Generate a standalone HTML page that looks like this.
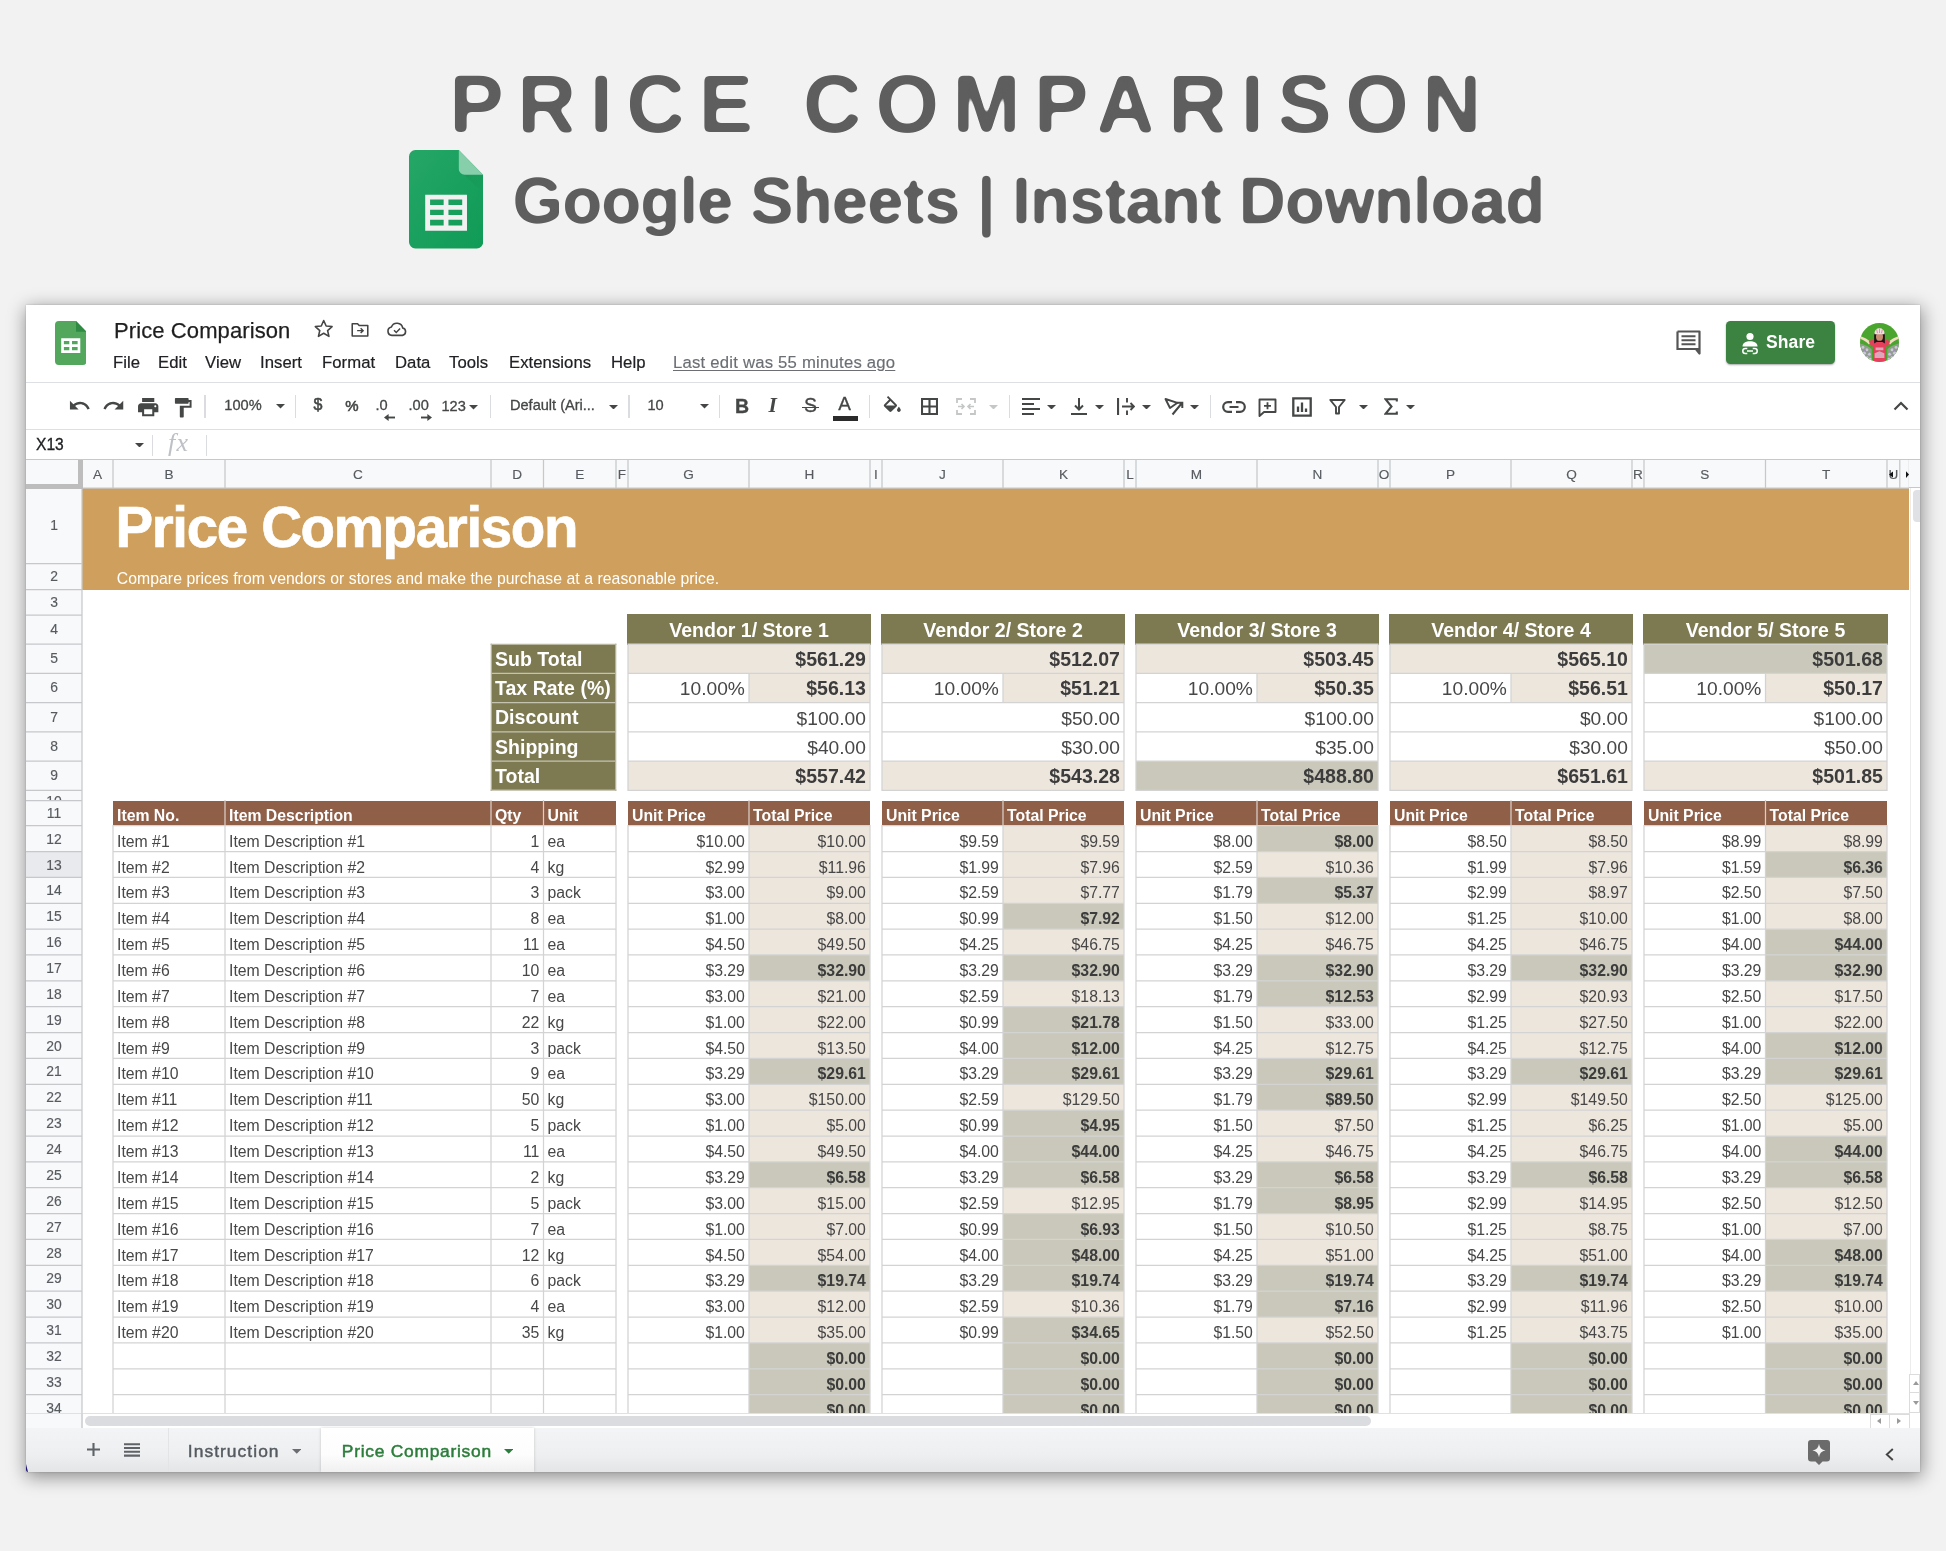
<!DOCTYPE html><html lang="en"><head><meta charset="utf-8"><title>Price Comparison</title><style>
*{box-sizing:border-box;margin:0;padding:0}
html,body{width:1946px;height:1551px;overflow:hidden}
body{background:#f2f2f2;font-family:"Liberation Sans",sans-serif;position:relative;color:#434343}
.abs,#win div,#win span.t,#win svg{position:absolute}
#win{will-change:transform;position:absolute;left:26px;top:305px;width:1894px;height:1167px;background:#fff;box-shadow:1px 4px 17px 1px rgba(0,0,0,.42), 0 0 2px rgba(0,0,0,.2);overflow:hidden}
.t{white-space:nowrap}
.menu{font-size:16.7px;color:#202124;top:48px;line-height:20px;letter-spacing:.05px;-webkit-text-stroke:.2px #202124}
.cell{overflow:hidden;white-space:nowrap;font-size:15.8px;line-height:1;color:#474747}
.cell.b{color:#3c3c3c}
.cell.hdr{color:#fff}
.cell span{position:absolute;bottom:2.1px;white-space:nowrap}
.l span{left:4.0px}.r span{right:4.1px}.c span{left:0;right:0;text-align:center}
.b{font-weight:bold}
.bd{border-right:1.3px solid #d4d4d4;border-bottom:1.3px solid #d4d4d4}
.big{font-size:19.2px}
.big.b,.big.hdr{font-size:19.55px}
.th{font-size:15.8px}
.th span{bottom:2.1px}
.big span{bottom:3.9px}
.hdr{color:#fff;font-weight:bold}
.rh{background:#f8f9fa;color:#575b60;-webkit-text-stroke:.15px #575b60;font-size:13.9px;text-align:center}
.ch{color:#575b60;-webkit-text-stroke:.15px #575b60;font-size:13.6px;text-align:center;line-height:31px}
.tb{color:#444}
</style></head><body>
<svg class="abs" style="left:0;top:0" width="1946" height="290" viewBox="0 0 1946 290">
<defs><filter id="rnd" x="-2%" y="-20%" width="104%" height="140%" color-interpolation-filters="sRGB"><feGaussianBlur stdDeviation="2.6"/><feColorMatrix type="matrix" values="1 0 0 0 0  0 1 0 0 0  0 0 1 0 0  0 0 0 7 -3"/></filter>
<filter id="rnd2" x="-2%" y="-20%" width="104%" height="140%" color-interpolation-filters="sRGB"><feGaussianBlur stdDeviation="2.1"/><feColorMatrix type="matrix" values="1 0 0 0 0  0 1 0 0 0  0 0 1 0 0  0 0 0 6 -2.5"/></filter></defs>
<text x="449.6" y="132.3" font-family="Liberation Sans, sans-serif" font-weight="bold" font-size="81" letter-spacing="13.95" fill="#5e5e5e" filter="url(#rnd)">PRICE COMPARISON</text>
<text x="512.7" y="223.3" font-family="Liberation Sans, sans-serif" font-weight="bold" font-size="64.5" letter-spacing="-0.35" fill="#5e5e5e" stroke="#5e5e5e" stroke-width="0.3" filter="url(#rnd2)">Google Sheets | Instant Download</text>
</svg>
<svg class="abs" style="left:408.7px;top:150.4px" width="74.2" height="98.4" viewBox="0 0 76 99" preserveAspectRatio="none">
<defs><linearGradient id="gs" x1="0" y1="0" x2="1" y2="1"><stop offset="0" stop-color="#25a667"/><stop offset="1" stop-color="#0f9b56"/></linearGradient>
<linearGradient id="gf" x1="0" y1="0" x2="1" y2="1"><stop offset="0" stop-color="#178f50" stop-opacity=".55"/><stop offset="1" stop-color="#178f50" stop-opacity="0"/></linearGradient></defs>
<path d="M6.500 0H51l25 25v67.500a6.500 6.500 0 0 1-6.500 6.500h-63A6.500 6.500 0 0 1 0 92.500v-86A6.500 6.500 0 0 1 6.500 0z" fill="url(#gs)"/>
<path d="M53 22l23 3v18z" fill="url(#gf)"/>
<path d="M51 0l25 25H57a6 6 0 0 1-6-6z" fill="#87ceab"/>
<path d="M16.600 45h42.800v36.300H16.600z M21.600 49.900v5.400h13.900v-5.400z M40.400 49.900v5.400h14.100v-5.400z M21.600 60v5.500h13.900V60z M40.400 60v5.500h14.100V60z M21.600 70.100V76h13.900v-5.900z M40.400 70.100V76h14.100v-5.900z" fill="#f1f1f1" fill-rule="evenodd"/>
</svg>
<div id="win">
<svg style="left:28.500px;top:15.800px" width="31.500" height="44" viewBox="0 0 33 45" preserveAspectRatio="none">
<path d="M4 0h18l11 11v30a4 4 0 0 1-4 4H4a4 4 0 0 1-4-4V4a4 4 0 0 1 4-4z" fill="#53a75d"/>
<path d="M22 0l11 11H22z" fill="#2f8a43"/>
<path d="M6.500 17.600h20v15h-20z M9.300 20.400v3.400h5.700v-3.400z M17.800 20.400v3.400h5.900v-3.400z M9.300 26.600v3.300h5.700v-3.300z M17.800 26.600v3.300h5.900v-3.300z" fill="#fff" fill-rule="evenodd"/>
</svg>
<span class="t" style="left:88px;top:12px;font-size:22px;line-height:28px;color:#1f1f1f;letter-spacing:.1px;-webkit-text-stroke:.25px #1f1f1f">Price Comparison</span>
<svg style="left:286.400px;top:12px" width="23.400" height="23.400" viewBox="0 0 24 24"><path d="M12 3.6l2.5 5.6 6.1.6-4.6 4.1 1.4 6-5.4-3.2-5.4 3.2 1.4-6-4.6-4.1 6.1-.6z" fill="none" stroke="#444" stroke-width="1.600" stroke-linejoin="round"/></svg>
<svg style="left:324px;top:15px" width="20" height="18" viewBox="0 0 24 22"><path d="M2.5 4.5h6.5l2 2.3h10.5v12.7h-19z" fill="none" stroke="#444" stroke-width="1.9" stroke-linejoin="round"/><path d="M8.5 13h6.5M12.8 10l3 3-3 3" fill="none" stroke="#444" stroke-width="1.8"/></svg>
<svg style="left:360px;top:15px" width="22" height="18" viewBox="0 0 26 20"><path d="M7 17.5a5 5 0 0 1-.6-9.9 7 7 0 0 1 13.4 1.3 4.4 4.4 0 0 1-.3 8.6z" fill="none" stroke="#444" stroke-width="1.9" stroke-linejoin="round"/><path d="M9.5 11.5l2.6 2.6 4.6-4.6" fill="none" stroke="#444" stroke-width="1.8"/></svg>
<span class="t menu" style="left:87px">File</span>
<span class="t menu" style="left:132px">Edit</span>
<span class="t menu" style="left:179px">View</span>
<span class="t menu" style="left:234px">Insert</span>
<span class="t menu" style="left:296px">Format</span>
<span class="t menu" style="left:369px">Data</span>
<span class="t menu" style="left:423px">Tools</span>
<span class="t menu" style="left:483px">Extensions</span>
<span class="t menu" style="left:585px">Help</span>
<span class="t menu" style="left:647px;color:#6b6f74;-webkit-text-stroke:.15px #6b6f74;text-decoration:underline;text-underline-offset:2px;letter-spacing:.22px">Last edit was 55 minutes ago</span>
<svg style="left:1649px;top:24px" width="27" height="27" viewBox="0 0 27 27"><path d="M2.5 2.5h22v17.5h-3.6l3.6 4.5v-4.5" fill="none" stroke="#555" stroke-width="2.2" stroke-linejoin="round"/><path d="M2.5 2.5v17.5h19" fill="none" stroke="#555" stroke-width="2.2"/><path d="M6.5 7.3h14M6.5 11.3h14M6.5 15.3h14" stroke="#555" stroke-width="1.9"/></svg>
<div style="left:1700px;top:16px;width:109px;height:43px;background:#3c8241;border-radius:4.500px;box-shadow:0 1px 2px rgba(0,0,0,.35)"></div>
<svg style="left:1713px;top:26px" width="22" height="24" viewBox="0 0 22 24"><circle cx="11" cy="5.5" r="3.6" fill="#fff"/><path d="M3.5 15.5c0-3.6 3.4-5.2 7.5-5.2s7.5 1.600 7.500 5.200z" fill="#fff"/><path d="M8.300 17.500h-2a2.500 2.500 0 0 0 0 5h2M13.700 17.500h2a2.500 2.500 0 0 1 0 5h-2M8 20h6" fill="none" stroke="#fff" stroke-width="1.5"/></svg>
<span class="t" style="left:1740px;top:26px;font-size:17.5px;line-height:22px;color:#fff;font-weight:bold;letter-spacing:.1px">Share</span>
<svg style="left:1833.7px;top:18px" width="39" height="39" viewBox="0 0 40 40"><defs><clipPath id="av"><circle cx="20" cy="20" r="20"/></clipPath></defs><g clip-path="url(#av)"><rect width="40" height="40" fill="#4aa52e"/><path d="M0 21c5 1 9 3 12 6v13H0zM40 21c-5 1-9 3-12 6v13h12z" fill="#8fa08a"/><g fill="#cfc6dc"><circle cx="3" cy="25" r="1.500"/><circle cx="7" cy="27.500" r="1.600"/><circle cx="4.500" cy="31" r="1.700"/><circle cx="9.500" cy="32" r="1.500"/><circle cx="7" cy="35.500" r="1.600"/><circle cx="10.500" cy="37" r="1.300"/><circle cx="37" cy="25" r="1.500"/><circle cx="33" cy="27.500" r="1.600"/><circle cx="35.500" cy="31" r="1.700"/><circle cx="30.500" cy="32" r="1.500"/><circle cx="33" cy="35.500" r="1.600"/><circle cx="29.500" cy="37" r="1.300"/></g><g fill="#9a8fb0"><circle cx="5" cy="28" r="1.100"/><circle cx="8" cy="30.500" r="1"/><circle cx="6" cy="33.500" r="1.100"/><circle cx="35" cy="28" r="1.100"/><circle cx="32" cy="30.500" r="1"/><circle cx="34" cy="33.500" r="1.100"/></g><path d="M-1 13c5 1.500 9 3.500 12 6.500l-1.800 2.500C6 19 3 17 -1 16zM41 13c-5 1.500-9 3.500-12 6.500l1.800 2.500C34 19 37 17 41 16z" fill="#f3dcc0"/><path d="M9 19c3-1.800 6.500-2.500 11-2.500s8 .7 11 2.500l-2.800 5.500-1.700-.8V41h-13V23.700l-1.700.8z" fill="#e63f5c"/><path d="M16 25h8v3h-8zM15 31l5-2 5 2v5H15z" fill="#d9c9d9" opacity=".75"/><path d="M14.500 10.500h11V21l-2.500-1.500h-6L14.500 21z" fill="#1d1614"/><ellipse cx="20" cy="14" rx="3.600" ry="4.300" fill="#c98c73"/><path d="M14.800 11.500c0-4 2.300-6 5.200-6s5.200 2 5.200 6z" fill="#f1dfe2"/><path d="M17 6.500l1 4M20 5.800v4.500M23 6.500l-1 4" stroke="#d990a5" stroke-width="1"/></g></svg>
<div style="left:0;top:77px;width:1894px;height:1.3px;background:#dcdfe3"></div>
<svg style="left:41.6px;top:89.2px" width="23.2" height="23.2" viewBox="0 0 24 24"><path d="M12.5 8c-2.650 0-5.050.99-6.900 2.600L2 7v9h9l-3.620-3.620c1.390-1.160 3.160-1.880 5.120-1.880 3.540 0 6.550 2.310 7.600 5.500l2.370-.78C21.080 11.030 17.150 8 12.500 8z" fill="#444746"/></svg>
<svg style="left:76.2px;top:89.2px" width="23.2" height="23.2" viewBox="0 0 24 24"><path d="M18.400 10.600C16.550 8.990 14.150 8 11.500 8c-4.650 0-8.580 3.030-9.960 7.220L3.900 16c1.050-3.190 4.050-5.500 7.600-5.500 1.950 0 3.730.72 5.120 1.880L13 16h9V7l-3.600 3.600z" fill="#444746"/></svg>
<svg style="left:110.4px;top:90.2px" width="24.4" height="24.4" viewBox="0 0 24 24"><path d="M19 8H5c-1.660 0-3 1.340-3 3v6h4v4h12v-4h4v-6c0-1.660-1.340-3-3-3zm-3 11H8v-5h8v5zm3-7c-.55 0-1-.45-1-1s.45-1 1-1 1 .45 1 1-.45 1-1 1zm-1-9H6v4h12V3z" fill="#444746"/></svg>
<svg style="left:145.2px;top:91.0px" width="23.5" height="23.5" viewBox="0 0 24 24"><path d="M18 4V3c0-.55-.45-1-1-1H5c-.55 0-1 .45-1 1v4c0 .55.45 1 1 1h12c.55 0 1-.45 1-1V6h1v4H9v11c0 .55.45 1 1 1h2c.55 0 1-.45 1-1v-9h8V4h-3z" fill="#444746"/></svg>
<div style="left:178.4px;top:89.5px;width:1.3px;height:23.5px;background:#dadce0"></div>
<span class="t" style="left:198.3px;top:91.5px;font-size:14.6px;line-height:16.6px;color:#444746;-webkit-text-stroke:.3px #444746;">100%</span>
<svg style="left:249.8px;top:99.2px" width="9" height="4.5" viewBox="0 0 10 5"><path d="M0 0h10L5 5z" fill="#444746"/></svg>
<div style="left:268.9px;top:89.5px;width:1.3px;height:23.5px;background:#dadce0"></div>
<span class="t" style="left:287.6px;top:91.2px;font-size:16px;line-height:18px;color:#444746;-webkit-text-stroke:.3px #444746;-webkit-text-stroke:.55px #444746">$</span>
<span class="t" style="left:319.3px;top:91.8px;font-size:15px;line-height:17px;color:#444746;-webkit-text-stroke:.3px #444746;-webkit-text-stroke:.55px #444746;letter-spacing:0">%</span>
<span class="t" style="left:349.5px;top:91.5px;font-size:14.6px;line-height:16.6px;color:#444746;-webkit-text-stroke:.3px #444746;">.0</span>
<svg style="left:358.3px;top:108.6px" width="11" height="7" viewBox="0 0 11 7"><path d="M11 3.500H3" fill="none" stroke="#444746" stroke-width="1.900"/><path d="M0 3.500L4.600 0v7z" fill="#444746"/></svg>
<span class="t" style="left:382.5px;top:91.5px;font-size:14.6px;line-height:16.6px;color:#444746;-webkit-text-stroke:.3px #444746;">.00</span>
<svg style="left:394.6px;top:108.6px" width="11" height="7" viewBox="0 0 11 7"><path d="M0 3.500H8" fill="none" stroke="#444746" stroke-width="1.900"/><path d="M11 3.500L6.400 0v7z" fill="#444746"/></svg>
<span class="t" style="left:415.5px;top:92.5px;font-size:14.6px;line-height:16.6px;color:#444746;-webkit-text-stroke:.3px #444746;">123</span>
<svg style="left:442.8px;top:100.2px" width="9" height="4.5" viewBox="0 0 10 5"><path d="M0 0h10L5 5z" fill="#444746"/></svg>
<div style="left:463.7px;top:89.5px;width:1.3px;height:23.5px;background:#dadce0"></div>
<span class="t" style="left:484.0px;top:91.8px;font-size:14.6px;line-height:16.6px;color:#444746;-webkit-text-stroke:.3px #444746;letter-spacing:-.02px">Default (Ari...</span>
<svg style="left:582.5px;top:99.8px" width="9" height="4.5" viewBox="0 0 10 5"><path d="M0 0h10L5 5z" fill="#444746"/></svg>
<div style="left:602.4px;top:89.5px;width:1.3px;height:23.5px;background:#dadce0"></div>
<span class="t" style="left:621.5px;top:91.5px;font-size:14.6px;line-height:16.6px;color:#444746;-webkit-text-stroke:.3px #444746;">10</span>
<svg style="left:674.1px;top:99.2px" width="9" height="4.5" viewBox="0 0 10 5"><path d="M0 0h10L5 5z" fill="#444746"/></svg>
<div style="left:693.0px;top:89.5px;width:1.3px;height:23.5px;background:#dadce0"></div>
<span class="t" style="left:709.0px;top:90.5px;font-size:19.5px;line-height:21.5px;color:#444746;-webkit-text-stroke:.3px #444746;font-weight:bold">B</span>
<span class="t" style="left:742.6px;top:89.2px;font-size:21.5px;line-height:23.5px;color:#444746;-webkit-text-stroke:.3px #444746;font-family:'Liberation Serif',serif;font-weight:bold;-webkit-text-stroke:0"><i>I</i></span>
<span class="t" style="left:778.0px;top:90.3px;font-size:19.5px;line-height:21.5px;color:#444746;-webkit-text-stroke:.3px #444746;font-weight:normal">S</span>
<div style="left:776px;top:101.5px;width:16.5px;height:1.8px;background:#444746"></div>
<span class="t" style="left:812.3px;top:88.0px;font-size:19px;line-height:21px;color:#444746;-webkit-text-stroke:.3px #444746;">A</span>
<div style="left:807.3px;top:111.0px;width:25px;height:4.5px;background:#2b2b2b"></div>
<div style="left:843.2px;top:89.5px;width:1.3px;height:23.5px;background:#dadce0"></div>
<svg style="left:854.8px;top:91.4px" width="22.6" height="22.6" viewBox="0 0 24 24"><path d="M16.560 8.940L7.620 0 6.210 1.410l2.380 2.380-5.150 5.150c-.59.59-.59 1.540 0 2.120l5.500 5.500c.29.29.68.44 1.060.44s.77-.15 1.060-.44l5.500-5.500c.59-.58.59-1.530 0-2.120zM5.210 10L10 5.210 14.790 10H5.210zM19 11.500s-2 2.170-2 3.500c0 1.100.9 2 2 2s2-.9 2-2c0-1.330-2-3.500-2-3.500z" fill="#444746"/></svg>
<svg style="left:894.5px;top:93.0px" width="17" height="17" viewBox="0 0 17 17"><path d="M1 1h15v15H1zM8.500 1v15M1 8.500h15" fill="none" stroke="#444746" stroke-width="2.100"/></svg>
<svg style="left:930.0px;top:93.0px" width="20" height="17" viewBox="0 0 20 17"><path d="M1 5V1h5M14 1h5v4M1 12v4h5M14 16h5v-4" fill="none" stroke="#c4c7c5" stroke-width="1.800"/><path d="M2 8.500h6M5.500 6l2.500 2.500L5.500 11M18 8.500h-6M14.500 6L12 8.500l2.500 2.500" fill="none" stroke="#c4c7c5" stroke-width="1.600"/></svg>
<svg style="left:962.8px;top:99.8px" width="9" height="4.5" viewBox="0 0 10 5"><path d="M0 0h10L5 5z" fill="#c4c7c5"/></svg>
<div style="left:982.8px;top:89.5px;width:1.3px;height:23.5px;background:#dadce0"></div>
<svg style="left:995.5px;top:93.0px" width="19" height="17" viewBox="0 0 19 17"><path d="M0 1h18M0 6h12M0 11h18M0 16h12" stroke="#444746" stroke-width="2.100"/></svg>
<svg style="left:1020.6px;top:99.8px" width="9" height="4.5" viewBox="0 0 10 5"><path d="M0 0h10L5 5z" fill="#444746"/></svg>
<svg style="left:1045.0px;top:93.0px" width="16" height="17" viewBox="0 0 16 17"><path d="M8 0v11M4 7.500l4 4 4-4M0 16h16" fill="none" stroke="#444746" stroke-width="2"/></svg>
<svg style="left:1068.7px;top:99.8px" width="9" height="4.5" viewBox="0 0 10 5"><path d="M0 0h10L5 5z" fill="#444746"/></svg>
<svg style="left:1090.5px;top:93.0px" width="18" height="17" viewBox="0 0 18 17"><path d="M1 0v17" stroke="#444746" stroke-width="2.200"/><path d="M10 0v4.500M10 12.500v4.500" stroke="#444746" stroke-width="1.900"/><path d="M5 8.500h12M13.500 5l3.500 3.500-3.500 3.500" fill="none" stroke="#444746" stroke-width="1.900"/></svg>
<svg style="left:1116.2px;top:99.8px" width="9" height="4.5" viewBox="0 0 10 5"><path d="M0 0h10L5 5z" fill="#444746"/></svg>
<svg style="left:1138.0px;top:92.0px" width="20" height="19" viewBox="0 0 20 19"><path d="M1.500 2l12 3.800-7.500 5.200z" fill="none" stroke="#444746" stroke-width="1.900" stroke-linejoin="round"/><path d="M8.500 17.500L18 6M13 5.800h5.300v5.300" fill="none" stroke="#444746" stroke-width="2"/></svg>
<svg style="left:1163.7px;top:99.8px" width="9" height="4.5" viewBox="0 0 10 5"><path d="M0 0h10L5 5z" fill="#444746"/></svg>
<div style="left:1183.7px;top:89.5px;width:1.3px;height:23.5px;background:#dadce0"></div>
<svg style="left:1195.5px;top:95.5px" width="24" height="12" viewBox="0 0 24 12"><path d="M10 1.200H6a4.800 4.800 0 0 0 0 9.600h4M14 1.200h4a4.800 4.800 0 0 1 0 9.600h-4M7.500 6h9" fill="none" stroke="#444746" stroke-width="2.200"/></svg>
<svg style="left:1232.0px;top:92.5px" width="19" height="19" viewBox="0 0 19 19"><path d="M1.500 1.500h16v12.500H6l-4.500 4z" fill="none" stroke="#444746" stroke-width="1.900" stroke-linejoin="round"/><path d="M9.500 4.300v7M6 7.800h7" stroke="#444746" stroke-width="1.800"/></svg>
<svg style="left:1265.5px;top:92.0px" width="20" height="20" viewBox="0 0 20 20"><path d="M1.300 1.300h17.400v17.400H1.300z" fill="none" stroke="#444746" stroke-width="2.300"/><path d="M6 9.500v5.500M10 5.500v9.500M14 11.500v3.500" stroke="#444746" stroke-width="2.300"/></svg>
<svg style="left:1303.0px;top:94.0px" width="17" height="16" viewBox="0 0 17 16"><path d="M1.300 1h14.400l-5.700 7v6.500H7V8z" fill="none" stroke="#444746" stroke-width="1.900" stroke-linejoin="round"/></svg>
<svg style="left:1333.0px;top:99.8px" width="9" height="4.5" viewBox="0 0 10 5"><path d="M0 0h10L5 5z" fill="#444746"/></svg>
<svg style="left:1357.5px;top:93.0px" width="14" height="17" viewBox="0 0 14 17"><path d="M12.800 3.500V1.200H1.500l6 7.300-6 7.300h11.300v-2.300" fill="none" stroke="#444746" stroke-width="2.100"/></svg>
<svg style="left:1380.3px;top:99.8px" width="9" height="4.5" viewBox="0 0 10 5"><path d="M0 0h10L5 5z" fill="#444746"/></svg>
<svg style="left:1867.0px;top:96.0px" width="16" height="10" viewBox="0 0 16 10"><path d="M1.500 8.500L8 2l6.500 6.500" fill="none" stroke="#444746" stroke-width="2.200"/></svg>
<div style="left:0;top:124px;width:1894px;height:1.300px;background:#dcdfe3"></div>
<span class="t" style="left:10.0px;top:131.0px;font-size:15.6px;line-height:17.6px;color:#202124;-webkit-text-stroke:.3px #202124;">X13</span>
<svg style="left:109.2px;top:137.6px" width="9" height="4.5" viewBox="0 0 10 5"><path d="M0 0h10L5 5z" fill="#444"/></svg>
<div style="left:126.1px;top:129.5px;width:1.3px;height:21.0px;background:#dadce0"></div>
<span class="t" style="left:142px;top:126px;font-size:26px;line-height:24px;font-style:italic;font-family:'Liberation Serif',serif;color:#bdc1c6;letter-spacing:1.2px">fx</span>
<div style="left:180.0px;top:129.5px;width:1.3px;height:21.0px;background:#dadce0"></div>
<div id="grid" style="left:0px;top:154px;width:1883.4px;height:954px;overflow:hidden;background:#fff">
<div style="left:56.0px;top:29.0px;width:1827.4px;height:101.5px;background:#cfa05d"></div>
<span class="t" style="left:89.4px;top:41.1px;font-size:56.5px;line-height:1;font-weight:bold;color:#fff;letter-spacing:-1.36px;-webkit-text-stroke:.7px #fff">Price Comparison</span>
<span class="t" style="left:90.8px;top:111.5px;font-size:15.75px;line-height:1;color:#fff;letter-spacing:.055px">Compare prices from vendors or stores and make the purchase at a reasonable price.</span>
<div class="cell l big hdr" style="left:465.0px;top:185.0px;width:125.0px;height:29.3px;background:#7d7a52;"><span>Sub Total</span></div>
<div class="cell l big hdr" style="left:465.0px;top:214.3px;width:125.0px;height:29.2px;background:#7d7a52;"><span>Tax Rate (%)</span></div>
<div class="cell l big hdr" style="left:465.0px;top:243.5px;width:125.0px;height:29.3px;background:#7d7a52;"><span>Discount</span></div>
<div class="cell l big hdr" style="left:465.0px;top:272.8px;width:125.0px;height:29.2px;background:#7d7a52;"><span>Shipping</span></div>
<div class="cell l big hdr" style="left:465.0px;top:302.0px;width:125.0px;height:29.3px;background:#7d7a52;"><span>Total</span></div>
<div class="cell c big hdr" style="left:601.4px;top:155.4px;width:243.2px;height:30.2px;background:#7d7a52;"><span style="bottom:3.9px">Vendor 1/ Store 1</span></div>
<div class="cell r big b" style="left:602.0px;top:185.0px;width:242.0px;height:29.3px;background:#ede6dd;"><span>$561.29</span></div>
<div class="cell r big" style="left:602.0px;top:214.3px;width:121.0px;height:29.2px;"><span>10.00%</span></div>
<div class="cell r big b" style="left:723.0px;top:214.3px;width:121.0px;height:29.2px;background:#ede6dd;"><span>$56.13</span></div>
<div class="cell r big" style="left:602.0px;top:243.5px;width:242.0px;height:29.3px;"><span>$100.00</span></div>
<div class="cell r big" style="left:602.0px;top:272.8px;width:242.0px;height:29.2px;"><span>$40.00</span></div>
<div class="cell r big b" style="left:602.0px;top:302.0px;width:242.0px;height:29.3px;background:#ede6dd;"><span>$557.42</span></div>
<div class="cell l hdr th" style="left:602.0px;top:341.6px;width:121.0px;height:25.1px;background:#8f5f48;"><span>Unit Price</span></div>
<div class="cell l hdr th" style="left:723.0px;top:341.6px;width:121.0px;height:25.1px;background:#8f5f48;"><span>Total Price</span></div>
<div class="cell r" style="left:602.0px;top:366.7px;width:121.0px;height:25.9px;"><span>$10.00</span></div>
<div class="cell r" style="left:723.0px;top:366.7px;width:121.0px;height:25.9px;background:#ede6dd;"><span>$10.00</span></div>
<div class="cell r" style="left:602.0px;top:392.6px;width:121.0px;height:25.9px;"><span>$2.99</span></div>
<div class="cell r" style="left:723.0px;top:392.6px;width:121.0px;height:25.9px;background:#ede6dd;"><span>$11.96</span></div>
<div class="cell r" style="left:602.0px;top:418.4px;width:121.0px;height:25.9px;"><span>$3.00</span></div>
<div class="cell r" style="left:723.0px;top:418.4px;width:121.0px;height:25.9px;background:#ede6dd;"><span>$9.00</span></div>
<div class="cell r" style="left:602.0px;top:444.3px;width:121.0px;height:25.9px;"><span>$1.00</span></div>
<div class="cell r" style="left:723.0px;top:444.3px;width:121.0px;height:25.9px;background:#ede6dd;"><span>$8.00</span></div>
<div class="cell r" style="left:602.0px;top:470.1px;width:121.0px;height:25.9px;"><span>$4.50</span></div>
<div class="cell r" style="left:723.0px;top:470.1px;width:121.0px;height:25.9px;background:#ede6dd;"><span>$49.50</span></div>
<div class="cell r" style="left:602.0px;top:496.0px;width:121.0px;height:25.9px;"><span>$3.29</span></div>
<div class="cell r b" style="left:723.0px;top:496.0px;width:121.0px;height:25.9px;background:#c9c8ba;"><span>$32.90</span></div>
<div class="cell r" style="left:602.0px;top:521.9px;width:121.0px;height:25.9px;"><span>$3.00</span></div>
<div class="cell r" style="left:723.0px;top:521.9px;width:121.0px;height:25.9px;background:#ede6dd;"><span>$21.00</span></div>
<div class="cell r" style="left:602.0px;top:547.7px;width:121.0px;height:25.9px;"><span>$1.00</span></div>
<div class="cell r" style="left:723.0px;top:547.7px;width:121.0px;height:25.9px;background:#ede6dd;"><span>$22.00</span></div>
<div class="cell r" style="left:602.0px;top:573.6px;width:121.0px;height:25.9px;"><span>$4.50</span></div>
<div class="cell r" style="left:723.0px;top:573.6px;width:121.0px;height:25.9px;background:#ede6dd;"><span>$13.50</span></div>
<div class="cell r" style="left:602.0px;top:599.4px;width:121.0px;height:25.9px;"><span>$3.29</span></div>
<div class="cell r b" style="left:723.0px;top:599.4px;width:121.0px;height:25.9px;background:#c9c8ba;"><span>$29.61</span></div>
<div class="cell r" style="left:602.0px;top:625.3px;width:121.0px;height:25.9px;"><span>$3.00</span></div>
<div class="cell r" style="left:723.0px;top:625.3px;width:121.0px;height:25.9px;background:#ede6dd;"><span>$150.00</span></div>
<div class="cell r" style="left:602.0px;top:651.2px;width:121.0px;height:25.9px;"><span>$1.00</span></div>
<div class="cell r" style="left:723.0px;top:651.2px;width:121.0px;height:25.9px;background:#ede6dd;"><span>$5.00</span></div>
<div class="cell r" style="left:602.0px;top:677.0px;width:121.0px;height:25.9px;"><span>$4.50</span></div>
<div class="cell r" style="left:723.0px;top:677.0px;width:121.0px;height:25.9px;background:#ede6dd;"><span>$49.50</span></div>
<div class="cell r" style="left:602.0px;top:702.9px;width:121.0px;height:25.9px;"><span>$3.29</span></div>
<div class="cell r b" style="left:723.0px;top:702.9px;width:121.0px;height:25.9px;background:#c9c8ba;"><span>$6.58</span></div>
<div class="cell r" style="left:602.0px;top:728.7px;width:121.0px;height:25.9px;"><span>$3.00</span></div>
<div class="cell r" style="left:723.0px;top:728.7px;width:121.0px;height:25.9px;background:#ede6dd;"><span>$15.00</span></div>
<div class="cell r" style="left:602.0px;top:754.6px;width:121.0px;height:25.9px;"><span>$1.00</span></div>
<div class="cell r" style="left:723.0px;top:754.6px;width:121.0px;height:25.9px;background:#ede6dd;"><span>$7.00</span></div>
<div class="cell r" style="left:602.0px;top:780.5px;width:121.0px;height:25.9px;"><span>$4.50</span></div>
<div class="cell r" style="left:723.0px;top:780.5px;width:121.0px;height:25.9px;background:#ede6dd;"><span>$54.00</span></div>
<div class="cell r" style="left:602.0px;top:806.3px;width:121.0px;height:25.9px;"><span>$3.29</span></div>
<div class="cell r b" style="left:723.0px;top:806.3px;width:121.0px;height:25.9px;background:#c9c8ba;"><span>$19.74</span></div>
<div class="cell r" style="left:602.0px;top:832.2px;width:121.0px;height:25.9px;"><span>$3.00</span></div>
<div class="cell r" style="left:723.0px;top:832.2px;width:121.0px;height:25.9px;background:#ede6dd;"><span>$12.00</span></div>
<div class="cell r" style="left:602.0px;top:858.0px;width:121.0px;height:25.9px;"><span>$1.00</span></div>
<div class="cell r" style="left:723.0px;top:858.0px;width:121.0px;height:25.9px;background:#ede6dd;"><span>$35.00</span></div>
<div class="cell r b" style="left:723.0px;top:883.9px;width:121.0px;height:25.9px;background:#c9c8ba;"><span>$0.00</span></div>
<div class="cell r b" style="left:723.0px;top:909.8px;width:121.0px;height:25.9px;background:#c9c8ba;"><span>$0.00</span></div>
<div class="cell r b" style="left:723.0px;top:935.6px;width:121.0px;height:25.9px;background:#c9c8ba;"><span>$0.00</span></div>
<div class="cell r b" style="left:723.0px;top:961.5px;width:121.0px;height:25.9px;background:#c9c8ba;"><span>$0.00</span></div>
<div class="cell c big hdr" style="left:855.4px;top:155.4px;width:243.2px;height:30.2px;background:#7d7a52;"><span style="bottom:3.9px">Vendor 2/ Store 2</span></div>
<div class="cell r big b" style="left:856.0px;top:185.0px;width:242.0px;height:29.3px;background:#ede6dd;"><span>$512.07</span></div>
<div class="cell r big" style="left:856.0px;top:214.3px;width:121.0px;height:29.2px;"><span>10.00%</span></div>
<div class="cell r big b" style="left:977.0px;top:214.3px;width:121.0px;height:29.2px;background:#ede6dd;"><span>$51.21</span></div>
<div class="cell r big" style="left:856.0px;top:243.5px;width:242.0px;height:29.3px;"><span>$50.00</span></div>
<div class="cell r big" style="left:856.0px;top:272.8px;width:242.0px;height:29.2px;"><span>$30.00</span></div>
<div class="cell r big b" style="left:856.0px;top:302.0px;width:242.0px;height:29.3px;background:#ede6dd;"><span>$543.28</span></div>
<div class="cell l hdr th" style="left:856.0px;top:341.6px;width:121.0px;height:25.1px;background:#8f5f48;"><span>Unit Price</span></div>
<div class="cell l hdr th" style="left:977.0px;top:341.6px;width:121.0px;height:25.1px;background:#8f5f48;"><span>Total Price</span></div>
<div class="cell r" style="left:856.0px;top:366.7px;width:121.0px;height:25.9px;"><span>$9.59</span></div>
<div class="cell r" style="left:977.0px;top:366.7px;width:121.0px;height:25.9px;background:#ede6dd;"><span>$9.59</span></div>
<div class="cell r" style="left:856.0px;top:392.6px;width:121.0px;height:25.9px;"><span>$1.99</span></div>
<div class="cell r" style="left:977.0px;top:392.6px;width:121.0px;height:25.9px;background:#ede6dd;"><span>$7.96</span></div>
<div class="cell r" style="left:856.0px;top:418.4px;width:121.0px;height:25.9px;"><span>$2.59</span></div>
<div class="cell r" style="left:977.0px;top:418.4px;width:121.0px;height:25.9px;background:#ede6dd;"><span>$7.77</span></div>
<div class="cell r" style="left:856.0px;top:444.3px;width:121.0px;height:25.9px;"><span>$0.99</span></div>
<div class="cell r b" style="left:977.0px;top:444.3px;width:121.0px;height:25.9px;background:#c9c8ba;"><span>$7.92</span></div>
<div class="cell r" style="left:856.0px;top:470.1px;width:121.0px;height:25.9px;"><span>$4.25</span></div>
<div class="cell r" style="left:977.0px;top:470.1px;width:121.0px;height:25.9px;background:#ede6dd;"><span>$46.75</span></div>
<div class="cell r" style="left:856.0px;top:496.0px;width:121.0px;height:25.9px;"><span>$3.29</span></div>
<div class="cell r b" style="left:977.0px;top:496.0px;width:121.0px;height:25.9px;background:#c9c8ba;"><span>$32.90</span></div>
<div class="cell r" style="left:856.0px;top:521.9px;width:121.0px;height:25.9px;"><span>$2.59</span></div>
<div class="cell r" style="left:977.0px;top:521.9px;width:121.0px;height:25.9px;background:#ede6dd;"><span>$18.13</span></div>
<div class="cell r" style="left:856.0px;top:547.7px;width:121.0px;height:25.9px;"><span>$0.99</span></div>
<div class="cell r b" style="left:977.0px;top:547.7px;width:121.0px;height:25.9px;background:#c9c8ba;"><span>$21.78</span></div>
<div class="cell r" style="left:856.0px;top:573.6px;width:121.0px;height:25.9px;"><span>$4.00</span></div>
<div class="cell r b" style="left:977.0px;top:573.6px;width:121.0px;height:25.9px;background:#c9c8ba;"><span>$12.00</span></div>
<div class="cell r" style="left:856.0px;top:599.4px;width:121.0px;height:25.9px;"><span>$3.29</span></div>
<div class="cell r b" style="left:977.0px;top:599.4px;width:121.0px;height:25.9px;background:#c9c8ba;"><span>$29.61</span></div>
<div class="cell r" style="left:856.0px;top:625.3px;width:121.0px;height:25.9px;"><span>$2.59</span></div>
<div class="cell r" style="left:977.0px;top:625.3px;width:121.0px;height:25.9px;background:#ede6dd;"><span>$129.50</span></div>
<div class="cell r" style="left:856.0px;top:651.2px;width:121.0px;height:25.9px;"><span>$0.99</span></div>
<div class="cell r b" style="left:977.0px;top:651.2px;width:121.0px;height:25.9px;background:#c9c8ba;"><span>$4.95</span></div>
<div class="cell r" style="left:856.0px;top:677.0px;width:121.0px;height:25.9px;"><span>$4.00</span></div>
<div class="cell r b" style="left:977.0px;top:677.0px;width:121.0px;height:25.9px;background:#c9c8ba;"><span>$44.00</span></div>
<div class="cell r" style="left:856.0px;top:702.9px;width:121.0px;height:25.9px;"><span>$3.29</span></div>
<div class="cell r b" style="left:977.0px;top:702.9px;width:121.0px;height:25.9px;background:#c9c8ba;"><span>$6.58</span></div>
<div class="cell r" style="left:856.0px;top:728.7px;width:121.0px;height:25.9px;"><span>$2.59</span></div>
<div class="cell r" style="left:977.0px;top:728.7px;width:121.0px;height:25.9px;background:#ede6dd;"><span>$12.95</span></div>
<div class="cell r" style="left:856.0px;top:754.6px;width:121.0px;height:25.9px;"><span>$0.99</span></div>
<div class="cell r b" style="left:977.0px;top:754.6px;width:121.0px;height:25.9px;background:#c9c8ba;"><span>$6.93</span></div>
<div class="cell r" style="left:856.0px;top:780.5px;width:121.0px;height:25.9px;"><span>$4.00</span></div>
<div class="cell r b" style="left:977.0px;top:780.5px;width:121.0px;height:25.9px;background:#c9c8ba;"><span>$48.00</span></div>
<div class="cell r" style="left:856.0px;top:806.3px;width:121.0px;height:25.9px;"><span>$3.29</span></div>
<div class="cell r b" style="left:977.0px;top:806.3px;width:121.0px;height:25.9px;background:#c9c8ba;"><span>$19.74</span></div>
<div class="cell r" style="left:856.0px;top:832.2px;width:121.0px;height:25.9px;"><span>$2.59</span></div>
<div class="cell r" style="left:977.0px;top:832.2px;width:121.0px;height:25.9px;background:#ede6dd;"><span>$10.36</span></div>
<div class="cell r" style="left:856.0px;top:858.0px;width:121.0px;height:25.9px;"><span>$0.99</span></div>
<div class="cell r b" style="left:977.0px;top:858.0px;width:121.0px;height:25.9px;background:#c9c8ba;"><span>$34.65</span></div>
<div class="cell r b" style="left:977.0px;top:883.9px;width:121.0px;height:25.9px;background:#c9c8ba;"><span>$0.00</span></div>
<div class="cell r b" style="left:977.0px;top:909.8px;width:121.0px;height:25.9px;background:#c9c8ba;"><span>$0.00</span></div>
<div class="cell r b" style="left:977.0px;top:935.6px;width:121.0px;height:25.9px;background:#c9c8ba;"><span>$0.00</span></div>
<div class="cell r b" style="left:977.0px;top:961.5px;width:121.0px;height:25.9px;background:#c9c8ba;"><span>$0.00</span></div>
<div class="cell c big hdr" style="left:1109.4px;top:155.4px;width:243.2px;height:30.2px;background:#7d7a52;"><span style="bottom:3.9px">Vendor 3/ Store 3</span></div>
<div class="cell r big b" style="left:1110.0px;top:185.0px;width:242.0px;height:29.3px;background:#ede6dd;"><span>$503.45</span></div>
<div class="cell r big" style="left:1110.0px;top:214.3px;width:121.0px;height:29.2px;"><span>10.00%</span></div>
<div class="cell r big b" style="left:1231.0px;top:214.3px;width:121.0px;height:29.2px;background:#ede6dd;"><span>$50.35</span></div>
<div class="cell r big" style="left:1110.0px;top:243.5px;width:242.0px;height:29.3px;"><span>$100.00</span></div>
<div class="cell r big" style="left:1110.0px;top:272.8px;width:242.0px;height:29.2px;"><span>$35.00</span></div>
<div class="cell r big b" style="left:1110.0px;top:302.0px;width:242.0px;height:29.3px;background:#c9c8ba;"><span>$488.80</span></div>
<div class="cell l hdr th" style="left:1110.0px;top:341.6px;width:121.0px;height:25.1px;background:#8f5f48;"><span>Unit Price</span></div>
<div class="cell l hdr th" style="left:1231.0px;top:341.6px;width:121.0px;height:25.1px;background:#8f5f48;"><span>Total Price</span></div>
<div class="cell r" style="left:1110.0px;top:366.7px;width:121.0px;height:25.9px;"><span>$8.00</span></div>
<div class="cell r b" style="left:1231.0px;top:366.7px;width:121.0px;height:25.9px;background:#c9c8ba;"><span>$8.00</span></div>
<div class="cell r" style="left:1110.0px;top:392.6px;width:121.0px;height:25.9px;"><span>$2.59</span></div>
<div class="cell r" style="left:1231.0px;top:392.6px;width:121.0px;height:25.9px;background:#ede6dd;"><span>$10.36</span></div>
<div class="cell r" style="left:1110.0px;top:418.4px;width:121.0px;height:25.9px;"><span>$1.79</span></div>
<div class="cell r b" style="left:1231.0px;top:418.4px;width:121.0px;height:25.9px;background:#c9c8ba;"><span>$5.37</span></div>
<div class="cell r" style="left:1110.0px;top:444.3px;width:121.0px;height:25.9px;"><span>$1.50</span></div>
<div class="cell r" style="left:1231.0px;top:444.3px;width:121.0px;height:25.9px;background:#ede6dd;"><span>$12.00</span></div>
<div class="cell r" style="left:1110.0px;top:470.1px;width:121.0px;height:25.9px;"><span>$4.25</span></div>
<div class="cell r" style="left:1231.0px;top:470.1px;width:121.0px;height:25.9px;background:#ede6dd;"><span>$46.75</span></div>
<div class="cell r" style="left:1110.0px;top:496.0px;width:121.0px;height:25.9px;"><span>$3.29</span></div>
<div class="cell r b" style="left:1231.0px;top:496.0px;width:121.0px;height:25.9px;background:#c9c8ba;"><span>$32.90</span></div>
<div class="cell r" style="left:1110.0px;top:521.9px;width:121.0px;height:25.9px;"><span>$1.79</span></div>
<div class="cell r b" style="left:1231.0px;top:521.9px;width:121.0px;height:25.9px;background:#c9c8ba;"><span>$12.53</span></div>
<div class="cell r" style="left:1110.0px;top:547.7px;width:121.0px;height:25.9px;"><span>$1.50</span></div>
<div class="cell r" style="left:1231.0px;top:547.7px;width:121.0px;height:25.9px;background:#ede6dd;"><span>$33.00</span></div>
<div class="cell r" style="left:1110.0px;top:573.6px;width:121.0px;height:25.9px;"><span>$4.25</span></div>
<div class="cell r" style="left:1231.0px;top:573.6px;width:121.0px;height:25.9px;background:#ede6dd;"><span>$12.75</span></div>
<div class="cell r" style="left:1110.0px;top:599.4px;width:121.0px;height:25.9px;"><span>$3.29</span></div>
<div class="cell r b" style="left:1231.0px;top:599.4px;width:121.0px;height:25.9px;background:#c9c8ba;"><span>$29.61</span></div>
<div class="cell r" style="left:1110.0px;top:625.3px;width:121.0px;height:25.9px;"><span>$1.79</span></div>
<div class="cell r b" style="left:1231.0px;top:625.3px;width:121.0px;height:25.9px;background:#c9c8ba;"><span>$89.50</span></div>
<div class="cell r" style="left:1110.0px;top:651.2px;width:121.0px;height:25.9px;"><span>$1.50</span></div>
<div class="cell r" style="left:1231.0px;top:651.2px;width:121.0px;height:25.9px;background:#ede6dd;"><span>$7.50</span></div>
<div class="cell r" style="left:1110.0px;top:677.0px;width:121.0px;height:25.9px;"><span>$4.25</span></div>
<div class="cell r" style="left:1231.0px;top:677.0px;width:121.0px;height:25.9px;background:#ede6dd;"><span>$46.75</span></div>
<div class="cell r" style="left:1110.0px;top:702.9px;width:121.0px;height:25.9px;"><span>$3.29</span></div>
<div class="cell r b" style="left:1231.0px;top:702.9px;width:121.0px;height:25.9px;background:#c9c8ba;"><span>$6.58</span></div>
<div class="cell r" style="left:1110.0px;top:728.7px;width:121.0px;height:25.9px;"><span>$1.79</span></div>
<div class="cell r b" style="left:1231.0px;top:728.7px;width:121.0px;height:25.9px;background:#c9c8ba;"><span>$8.95</span></div>
<div class="cell r" style="left:1110.0px;top:754.6px;width:121.0px;height:25.9px;"><span>$1.50</span></div>
<div class="cell r" style="left:1231.0px;top:754.6px;width:121.0px;height:25.9px;background:#ede6dd;"><span>$10.50</span></div>
<div class="cell r" style="left:1110.0px;top:780.5px;width:121.0px;height:25.9px;"><span>$4.25</span></div>
<div class="cell r" style="left:1231.0px;top:780.5px;width:121.0px;height:25.9px;background:#ede6dd;"><span>$51.00</span></div>
<div class="cell r" style="left:1110.0px;top:806.3px;width:121.0px;height:25.9px;"><span>$3.29</span></div>
<div class="cell r b" style="left:1231.0px;top:806.3px;width:121.0px;height:25.9px;background:#c9c8ba;"><span>$19.74</span></div>
<div class="cell r" style="left:1110.0px;top:832.2px;width:121.0px;height:25.9px;"><span>$1.79</span></div>
<div class="cell r b" style="left:1231.0px;top:832.2px;width:121.0px;height:25.9px;background:#c9c8ba;"><span>$7.16</span></div>
<div class="cell r" style="left:1110.0px;top:858.0px;width:121.0px;height:25.9px;"><span>$1.50</span></div>
<div class="cell r" style="left:1231.0px;top:858.0px;width:121.0px;height:25.9px;background:#ede6dd;"><span>$52.50</span></div>
<div class="cell r b" style="left:1231.0px;top:883.9px;width:121.0px;height:25.9px;background:#c9c8ba;"><span>$0.00</span></div>
<div class="cell r b" style="left:1231.0px;top:909.8px;width:121.0px;height:25.9px;background:#c9c8ba;"><span>$0.00</span></div>
<div class="cell r b" style="left:1231.0px;top:935.6px;width:121.0px;height:25.9px;background:#c9c8ba;"><span>$0.00</span></div>
<div class="cell r b" style="left:1231.0px;top:961.5px;width:121.0px;height:25.9px;background:#c9c8ba;"><span>$0.00</span></div>
<div class="cell c big hdr" style="left:1363.4px;top:155.4px;width:243.2px;height:30.2px;background:#7d7a52;"><span style="bottom:3.9px">Vendor 4/ Store 4</span></div>
<div class="cell r big b" style="left:1364.0px;top:185.0px;width:242.0px;height:29.3px;background:#ede6dd;"><span>$565.10</span></div>
<div class="cell r big" style="left:1364.0px;top:214.3px;width:121.0px;height:29.2px;"><span>10.00%</span></div>
<div class="cell r big b" style="left:1485.0px;top:214.3px;width:121.0px;height:29.2px;background:#ede6dd;"><span>$56.51</span></div>
<div class="cell r big" style="left:1364.0px;top:243.5px;width:242.0px;height:29.3px;"><span>$0.00</span></div>
<div class="cell r big" style="left:1364.0px;top:272.8px;width:242.0px;height:29.2px;"><span>$30.00</span></div>
<div class="cell r big b" style="left:1364.0px;top:302.0px;width:242.0px;height:29.3px;background:#ede6dd;"><span>$651.61</span></div>
<div class="cell l hdr th" style="left:1364.0px;top:341.6px;width:121.0px;height:25.1px;background:#8f5f48;"><span>Unit Price</span></div>
<div class="cell l hdr th" style="left:1485.0px;top:341.6px;width:121.0px;height:25.1px;background:#8f5f48;"><span>Total Price</span></div>
<div class="cell r" style="left:1364.0px;top:366.7px;width:121.0px;height:25.9px;"><span>$8.50</span></div>
<div class="cell r" style="left:1485.0px;top:366.7px;width:121.0px;height:25.9px;background:#ede6dd;"><span>$8.50</span></div>
<div class="cell r" style="left:1364.0px;top:392.6px;width:121.0px;height:25.9px;"><span>$1.99</span></div>
<div class="cell r" style="left:1485.0px;top:392.6px;width:121.0px;height:25.9px;background:#ede6dd;"><span>$7.96</span></div>
<div class="cell r" style="left:1364.0px;top:418.4px;width:121.0px;height:25.9px;"><span>$2.99</span></div>
<div class="cell r" style="left:1485.0px;top:418.4px;width:121.0px;height:25.9px;background:#ede6dd;"><span>$8.97</span></div>
<div class="cell r" style="left:1364.0px;top:444.3px;width:121.0px;height:25.9px;"><span>$1.25</span></div>
<div class="cell r" style="left:1485.0px;top:444.3px;width:121.0px;height:25.9px;background:#ede6dd;"><span>$10.00</span></div>
<div class="cell r" style="left:1364.0px;top:470.1px;width:121.0px;height:25.9px;"><span>$4.25</span></div>
<div class="cell r" style="left:1485.0px;top:470.1px;width:121.0px;height:25.9px;background:#ede6dd;"><span>$46.75</span></div>
<div class="cell r" style="left:1364.0px;top:496.0px;width:121.0px;height:25.9px;"><span>$3.29</span></div>
<div class="cell r b" style="left:1485.0px;top:496.0px;width:121.0px;height:25.9px;background:#c9c8ba;"><span>$32.90</span></div>
<div class="cell r" style="left:1364.0px;top:521.9px;width:121.0px;height:25.9px;"><span>$2.99</span></div>
<div class="cell r" style="left:1485.0px;top:521.9px;width:121.0px;height:25.9px;background:#ede6dd;"><span>$20.93</span></div>
<div class="cell r" style="left:1364.0px;top:547.7px;width:121.0px;height:25.9px;"><span>$1.25</span></div>
<div class="cell r" style="left:1485.0px;top:547.7px;width:121.0px;height:25.9px;background:#ede6dd;"><span>$27.50</span></div>
<div class="cell r" style="left:1364.0px;top:573.6px;width:121.0px;height:25.9px;"><span>$4.25</span></div>
<div class="cell r" style="left:1485.0px;top:573.6px;width:121.0px;height:25.9px;background:#ede6dd;"><span>$12.75</span></div>
<div class="cell r" style="left:1364.0px;top:599.4px;width:121.0px;height:25.9px;"><span>$3.29</span></div>
<div class="cell r b" style="left:1485.0px;top:599.4px;width:121.0px;height:25.9px;background:#c9c8ba;"><span>$29.61</span></div>
<div class="cell r" style="left:1364.0px;top:625.3px;width:121.0px;height:25.9px;"><span>$2.99</span></div>
<div class="cell r" style="left:1485.0px;top:625.3px;width:121.0px;height:25.9px;background:#ede6dd;"><span>$149.50</span></div>
<div class="cell r" style="left:1364.0px;top:651.2px;width:121.0px;height:25.9px;"><span>$1.25</span></div>
<div class="cell r" style="left:1485.0px;top:651.2px;width:121.0px;height:25.9px;background:#ede6dd;"><span>$6.25</span></div>
<div class="cell r" style="left:1364.0px;top:677.0px;width:121.0px;height:25.9px;"><span>$4.25</span></div>
<div class="cell r" style="left:1485.0px;top:677.0px;width:121.0px;height:25.9px;background:#ede6dd;"><span>$46.75</span></div>
<div class="cell r" style="left:1364.0px;top:702.9px;width:121.0px;height:25.9px;"><span>$3.29</span></div>
<div class="cell r b" style="left:1485.0px;top:702.9px;width:121.0px;height:25.9px;background:#c9c8ba;"><span>$6.58</span></div>
<div class="cell r" style="left:1364.0px;top:728.7px;width:121.0px;height:25.9px;"><span>$2.99</span></div>
<div class="cell r" style="left:1485.0px;top:728.7px;width:121.0px;height:25.9px;background:#ede6dd;"><span>$14.95</span></div>
<div class="cell r" style="left:1364.0px;top:754.6px;width:121.0px;height:25.9px;"><span>$1.25</span></div>
<div class="cell r" style="left:1485.0px;top:754.6px;width:121.0px;height:25.9px;background:#ede6dd;"><span>$8.75</span></div>
<div class="cell r" style="left:1364.0px;top:780.5px;width:121.0px;height:25.9px;"><span>$4.25</span></div>
<div class="cell r" style="left:1485.0px;top:780.5px;width:121.0px;height:25.9px;background:#ede6dd;"><span>$51.00</span></div>
<div class="cell r" style="left:1364.0px;top:806.3px;width:121.0px;height:25.9px;"><span>$3.29</span></div>
<div class="cell r b" style="left:1485.0px;top:806.3px;width:121.0px;height:25.9px;background:#c9c8ba;"><span>$19.74</span></div>
<div class="cell r" style="left:1364.0px;top:832.2px;width:121.0px;height:25.9px;"><span>$2.99</span></div>
<div class="cell r" style="left:1485.0px;top:832.2px;width:121.0px;height:25.9px;background:#ede6dd;"><span>$11.96</span></div>
<div class="cell r" style="left:1364.0px;top:858.0px;width:121.0px;height:25.9px;"><span>$1.25</span></div>
<div class="cell r" style="left:1485.0px;top:858.0px;width:121.0px;height:25.9px;background:#ede6dd;"><span>$43.75</span></div>
<div class="cell r b" style="left:1485.0px;top:883.9px;width:121.0px;height:25.9px;background:#c9c8ba;"><span>$0.00</span></div>
<div class="cell r b" style="left:1485.0px;top:909.8px;width:121.0px;height:25.9px;background:#c9c8ba;"><span>$0.00</span></div>
<div class="cell r b" style="left:1485.0px;top:935.6px;width:121.0px;height:25.9px;background:#c9c8ba;"><span>$0.00</span></div>
<div class="cell r b" style="left:1485.0px;top:961.5px;width:121.0px;height:25.9px;background:#c9c8ba;"><span>$0.00</span></div>
<div class="cell c big hdr" style="left:1617.4px;top:155.4px;width:244.2px;height:30.2px;background:#7d7a52;"><span style="bottom:3.9px">Vendor 5/ Store 5</span></div>
<div class="cell r big b" style="left:1618.0px;top:185.0px;width:243.0px;height:29.3px;background:#c9c8ba;"><span>$501.68</span></div>
<div class="cell r big" style="left:1618.0px;top:214.3px;width:121.5px;height:29.2px;"><span>10.00%</span></div>
<div class="cell r big b" style="left:1739.5px;top:214.3px;width:121.5px;height:29.2px;background:#ede6dd;"><span>$50.17</span></div>
<div class="cell r big" style="left:1618.0px;top:243.5px;width:243.0px;height:29.3px;"><span>$100.00</span></div>
<div class="cell r big" style="left:1618.0px;top:272.8px;width:243.0px;height:29.2px;"><span>$50.00</span></div>
<div class="cell r big b" style="left:1618.0px;top:302.0px;width:243.0px;height:29.3px;background:#ede6dd;"><span>$501.85</span></div>
<div class="cell l hdr th" style="left:1618.0px;top:341.6px;width:121.5px;height:25.1px;background:#8f5f48;"><span>Unit Price</span></div>
<div class="cell l hdr th" style="left:1739.5px;top:341.6px;width:121.5px;height:25.1px;background:#8f5f48;"><span>Total Price</span></div>
<div class="cell r" style="left:1618.0px;top:366.7px;width:121.5px;height:25.9px;"><span>$8.99</span></div>
<div class="cell r" style="left:1739.5px;top:366.7px;width:121.5px;height:25.9px;background:#ede6dd;"><span>$8.99</span></div>
<div class="cell r" style="left:1618.0px;top:392.6px;width:121.5px;height:25.9px;"><span>$1.59</span></div>
<div class="cell r b" style="left:1739.5px;top:392.6px;width:121.5px;height:25.9px;background:#c9c8ba;"><span>$6.36</span></div>
<div class="cell r" style="left:1618.0px;top:418.4px;width:121.5px;height:25.9px;"><span>$2.50</span></div>
<div class="cell r" style="left:1739.5px;top:418.4px;width:121.5px;height:25.9px;background:#ede6dd;"><span>$7.50</span></div>
<div class="cell r" style="left:1618.0px;top:444.3px;width:121.5px;height:25.9px;"><span>$1.00</span></div>
<div class="cell r" style="left:1739.5px;top:444.3px;width:121.5px;height:25.9px;background:#ede6dd;"><span>$8.00</span></div>
<div class="cell r" style="left:1618.0px;top:470.1px;width:121.5px;height:25.9px;"><span>$4.00</span></div>
<div class="cell r b" style="left:1739.5px;top:470.1px;width:121.5px;height:25.9px;background:#c9c8ba;"><span>$44.00</span></div>
<div class="cell r" style="left:1618.0px;top:496.0px;width:121.5px;height:25.9px;"><span>$3.29</span></div>
<div class="cell r b" style="left:1739.5px;top:496.0px;width:121.5px;height:25.9px;background:#c9c8ba;"><span>$32.90</span></div>
<div class="cell r" style="left:1618.0px;top:521.9px;width:121.5px;height:25.9px;"><span>$2.50</span></div>
<div class="cell r" style="left:1739.5px;top:521.9px;width:121.5px;height:25.9px;background:#ede6dd;"><span>$17.50</span></div>
<div class="cell r" style="left:1618.0px;top:547.7px;width:121.5px;height:25.9px;"><span>$1.00</span></div>
<div class="cell r" style="left:1739.5px;top:547.7px;width:121.5px;height:25.9px;background:#ede6dd;"><span>$22.00</span></div>
<div class="cell r" style="left:1618.0px;top:573.6px;width:121.5px;height:25.9px;"><span>$4.00</span></div>
<div class="cell r b" style="left:1739.5px;top:573.6px;width:121.5px;height:25.9px;background:#c9c8ba;"><span>$12.00</span></div>
<div class="cell r" style="left:1618.0px;top:599.4px;width:121.5px;height:25.9px;"><span>$3.29</span></div>
<div class="cell r b" style="left:1739.5px;top:599.4px;width:121.5px;height:25.9px;background:#c9c8ba;"><span>$29.61</span></div>
<div class="cell r" style="left:1618.0px;top:625.3px;width:121.5px;height:25.9px;"><span>$2.50</span></div>
<div class="cell r" style="left:1739.5px;top:625.3px;width:121.5px;height:25.9px;background:#ede6dd;"><span>$125.00</span></div>
<div class="cell r" style="left:1618.0px;top:651.2px;width:121.5px;height:25.9px;"><span>$1.00</span></div>
<div class="cell r" style="left:1739.5px;top:651.2px;width:121.5px;height:25.9px;background:#ede6dd;"><span>$5.00</span></div>
<div class="cell r" style="left:1618.0px;top:677.0px;width:121.5px;height:25.9px;"><span>$4.00</span></div>
<div class="cell r b" style="left:1739.5px;top:677.0px;width:121.5px;height:25.9px;background:#c9c8ba;"><span>$44.00</span></div>
<div class="cell r" style="left:1618.0px;top:702.9px;width:121.5px;height:25.9px;"><span>$3.29</span></div>
<div class="cell r b" style="left:1739.5px;top:702.9px;width:121.5px;height:25.9px;background:#c9c8ba;"><span>$6.58</span></div>
<div class="cell r" style="left:1618.0px;top:728.7px;width:121.5px;height:25.9px;"><span>$2.50</span></div>
<div class="cell r" style="left:1739.5px;top:728.7px;width:121.5px;height:25.9px;background:#ede6dd;"><span>$12.50</span></div>
<div class="cell r" style="left:1618.0px;top:754.6px;width:121.5px;height:25.9px;"><span>$1.00</span></div>
<div class="cell r" style="left:1739.5px;top:754.6px;width:121.5px;height:25.9px;background:#ede6dd;"><span>$7.00</span></div>
<div class="cell r" style="left:1618.0px;top:780.5px;width:121.5px;height:25.9px;"><span>$4.00</span></div>
<div class="cell r b" style="left:1739.5px;top:780.5px;width:121.5px;height:25.9px;background:#c9c8ba;"><span>$48.00</span></div>
<div class="cell r" style="left:1618.0px;top:806.3px;width:121.5px;height:25.9px;"><span>$3.29</span></div>
<div class="cell r b" style="left:1739.5px;top:806.3px;width:121.5px;height:25.9px;background:#c9c8ba;"><span>$19.74</span></div>
<div class="cell r" style="left:1618.0px;top:832.2px;width:121.5px;height:25.9px;"><span>$2.50</span></div>
<div class="cell r" style="left:1739.5px;top:832.2px;width:121.5px;height:25.9px;background:#ede6dd;"><span>$10.00</span></div>
<div class="cell r" style="left:1618.0px;top:858.0px;width:121.5px;height:25.9px;"><span>$1.00</span></div>
<div class="cell r" style="left:1739.5px;top:858.0px;width:121.5px;height:25.9px;background:#ede6dd;"><span>$35.00</span></div>
<div class="cell r b" style="left:1739.5px;top:883.9px;width:121.5px;height:25.9px;background:#c9c8ba;"><span>$0.00</span></div>
<div class="cell r b" style="left:1739.5px;top:909.8px;width:121.5px;height:25.9px;background:#c9c8ba;"><span>$0.00</span></div>
<div class="cell r b" style="left:1739.5px;top:935.6px;width:121.5px;height:25.9px;background:#c9c8ba;"><span>$0.00</span></div>
<div class="cell r b" style="left:1739.5px;top:961.5px;width:121.5px;height:25.9px;background:#c9c8ba;"><span>$0.00</span></div>
<div class="cell l hdr th" style="left:87.0px;top:341.6px;width:112.0px;height:25.1px;background:#8f5f48;"><span>Item No.</span></div>
<div class="cell l hdr th" style="left:199.0px;top:341.6px;width:266.0px;height:25.1px;background:#8f5f48;"><span>Item Description</span></div>
<div class="cell l hdr th" style="left:465.0px;top:341.6px;width:52.5px;height:25.1px;background:#8f5f48;"><span>Qty</span></div>
<div class="cell l hdr th" style="left:517.5px;top:341.6px;width:72.5px;height:25.1px;background:#8f5f48;"><span>Unit</span></div>
<div class="cell l" style="left:87.0px;top:366.7px;width:112.0px;height:25.9px;"><span>Item #1</span></div>
<div class="cell l" style="left:199.0px;top:366.7px;width:266.0px;height:25.9px;"><span>Item Description #1</span></div>
<div class="cell r" style="left:465.0px;top:366.7px;width:52.5px;height:25.9px;"><span>1</span></div>
<div class="cell l" style="left:517.5px;top:366.7px;width:72.5px;height:25.9px;"><span>ea</span></div>
<div class="cell l" style="left:87.0px;top:392.6px;width:112.0px;height:25.9px;"><span>Item #2</span></div>
<div class="cell l" style="left:199.0px;top:392.6px;width:266.0px;height:25.9px;"><span>Item Description #2</span></div>
<div class="cell r" style="left:465.0px;top:392.6px;width:52.5px;height:25.9px;"><span>4</span></div>
<div class="cell l" style="left:517.5px;top:392.6px;width:72.5px;height:25.9px;"><span>kg</span></div>
<div class="cell l" style="left:87.0px;top:418.4px;width:112.0px;height:25.9px;"><span>Item #3</span></div>
<div class="cell l" style="left:199.0px;top:418.4px;width:266.0px;height:25.9px;"><span>Item Description #3</span></div>
<div class="cell r" style="left:465.0px;top:418.4px;width:52.5px;height:25.9px;"><span>3</span></div>
<div class="cell l" style="left:517.5px;top:418.4px;width:72.5px;height:25.9px;"><span>pack</span></div>
<div class="cell l" style="left:87.0px;top:444.3px;width:112.0px;height:25.9px;"><span>Item #4</span></div>
<div class="cell l" style="left:199.0px;top:444.3px;width:266.0px;height:25.9px;"><span>Item Description #4</span></div>
<div class="cell r" style="left:465.0px;top:444.3px;width:52.5px;height:25.9px;"><span>8</span></div>
<div class="cell l" style="left:517.5px;top:444.3px;width:72.5px;height:25.9px;"><span>ea</span></div>
<div class="cell l" style="left:87.0px;top:470.1px;width:112.0px;height:25.9px;"><span>Item #5</span></div>
<div class="cell l" style="left:199.0px;top:470.1px;width:266.0px;height:25.9px;"><span>Item Description #5</span></div>
<div class="cell r" style="left:465.0px;top:470.1px;width:52.5px;height:25.9px;"><span>11</span></div>
<div class="cell l" style="left:517.5px;top:470.1px;width:72.5px;height:25.9px;"><span>ea</span></div>
<div class="cell l" style="left:87.0px;top:496.0px;width:112.0px;height:25.9px;"><span>Item #6</span></div>
<div class="cell l" style="left:199.0px;top:496.0px;width:266.0px;height:25.9px;"><span>Item Description #6</span></div>
<div class="cell r" style="left:465.0px;top:496.0px;width:52.5px;height:25.9px;"><span>10</span></div>
<div class="cell l" style="left:517.5px;top:496.0px;width:72.5px;height:25.9px;"><span>ea</span></div>
<div class="cell l" style="left:87.0px;top:521.9px;width:112.0px;height:25.9px;"><span>Item #7</span></div>
<div class="cell l" style="left:199.0px;top:521.9px;width:266.0px;height:25.9px;"><span>Item Description #7</span></div>
<div class="cell r" style="left:465.0px;top:521.9px;width:52.5px;height:25.9px;"><span>7</span></div>
<div class="cell l" style="left:517.5px;top:521.9px;width:72.5px;height:25.9px;"><span>ea</span></div>
<div class="cell l" style="left:87.0px;top:547.7px;width:112.0px;height:25.9px;"><span>Item #8</span></div>
<div class="cell l" style="left:199.0px;top:547.7px;width:266.0px;height:25.9px;"><span>Item Description #8</span></div>
<div class="cell r" style="left:465.0px;top:547.7px;width:52.5px;height:25.9px;"><span>22</span></div>
<div class="cell l" style="left:517.5px;top:547.7px;width:72.5px;height:25.9px;"><span>kg</span></div>
<div class="cell l" style="left:87.0px;top:573.6px;width:112.0px;height:25.9px;"><span>Item #9</span></div>
<div class="cell l" style="left:199.0px;top:573.6px;width:266.0px;height:25.9px;"><span>Item Description #9</span></div>
<div class="cell r" style="left:465.0px;top:573.6px;width:52.5px;height:25.9px;"><span>3</span></div>
<div class="cell l" style="left:517.5px;top:573.6px;width:72.5px;height:25.9px;"><span>pack</span></div>
<div class="cell l" style="left:87.0px;top:599.4px;width:112.0px;height:25.9px;"><span>Item #10</span></div>
<div class="cell l" style="left:199.0px;top:599.4px;width:266.0px;height:25.9px;"><span>Item Description #10</span></div>
<div class="cell r" style="left:465.0px;top:599.4px;width:52.5px;height:25.9px;"><span>9</span></div>
<div class="cell l" style="left:517.5px;top:599.4px;width:72.5px;height:25.9px;"><span>ea</span></div>
<div class="cell l" style="left:87.0px;top:625.3px;width:112.0px;height:25.9px;"><span>Item #11</span></div>
<div class="cell l" style="left:199.0px;top:625.3px;width:266.0px;height:25.9px;"><span>Item Description #11</span></div>
<div class="cell r" style="left:465.0px;top:625.3px;width:52.5px;height:25.9px;"><span>50</span></div>
<div class="cell l" style="left:517.5px;top:625.3px;width:72.5px;height:25.9px;"><span>kg</span></div>
<div class="cell l" style="left:87.0px;top:651.2px;width:112.0px;height:25.9px;"><span>Item #12</span></div>
<div class="cell l" style="left:199.0px;top:651.2px;width:266.0px;height:25.9px;"><span>Item Description #12</span></div>
<div class="cell r" style="left:465.0px;top:651.2px;width:52.5px;height:25.9px;"><span>5</span></div>
<div class="cell l" style="left:517.5px;top:651.2px;width:72.5px;height:25.9px;"><span>pack</span></div>
<div class="cell l" style="left:87.0px;top:677.0px;width:112.0px;height:25.9px;"><span>Item #13</span></div>
<div class="cell l" style="left:199.0px;top:677.0px;width:266.0px;height:25.9px;"><span>Item Description #13</span></div>
<div class="cell r" style="left:465.0px;top:677.0px;width:52.5px;height:25.9px;"><span>11</span></div>
<div class="cell l" style="left:517.5px;top:677.0px;width:72.5px;height:25.9px;"><span>ea</span></div>
<div class="cell l" style="left:87.0px;top:702.9px;width:112.0px;height:25.9px;"><span>Item #14</span></div>
<div class="cell l" style="left:199.0px;top:702.9px;width:266.0px;height:25.9px;"><span>Item Description #14</span></div>
<div class="cell r" style="left:465.0px;top:702.9px;width:52.5px;height:25.9px;"><span>2</span></div>
<div class="cell l" style="left:517.5px;top:702.9px;width:72.5px;height:25.9px;"><span>kg</span></div>
<div class="cell l" style="left:87.0px;top:728.7px;width:112.0px;height:25.9px;"><span>Item #15</span></div>
<div class="cell l" style="left:199.0px;top:728.7px;width:266.0px;height:25.9px;"><span>Item Description #15</span></div>
<div class="cell r" style="left:465.0px;top:728.7px;width:52.5px;height:25.9px;"><span>5</span></div>
<div class="cell l" style="left:517.5px;top:728.7px;width:72.5px;height:25.9px;"><span>pack</span></div>
<div class="cell l" style="left:87.0px;top:754.6px;width:112.0px;height:25.9px;"><span>Item #16</span></div>
<div class="cell l" style="left:199.0px;top:754.6px;width:266.0px;height:25.9px;"><span>Item Description #16</span></div>
<div class="cell r" style="left:465.0px;top:754.6px;width:52.5px;height:25.9px;"><span>7</span></div>
<div class="cell l" style="left:517.5px;top:754.6px;width:72.5px;height:25.9px;"><span>ea</span></div>
<div class="cell l" style="left:87.0px;top:780.5px;width:112.0px;height:25.9px;"><span>Item #17</span></div>
<div class="cell l" style="left:199.0px;top:780.5px;width:266.0px;height:25.9px;"><span>Item Description #17</span></div>
<div class="cell r" style="left:465.0px;top:780.5px;width:52.5px;height:25.9px;"><span>12</span></div>
<div class="cell l" style="left:517.5px;top:780.5px;width:72.5px;height:25.9px;"><span>kg</span></div>
<div class="cell l" style="left:87.0px;top:806.3px;width:112.0px;height:25.9px;"><span>Item #18</span></div>
<div class="cell l" style="left:199.0px;top:806.3px;width:266.0px;height:25.9px;"><span>Item Description #18</span></div>
<div class="cell r" style="left:465.0px;top:806.3px;width:52.5px;height:25.9px;"><span>6</span></div>
<div class="cell l" style="left:517.5px;top:806.3px;width:72.5px;height:25.9px;"><span>pack</span></div>
<div class="cell l" style="left:87.0px;top:832.2px;width:112.0px;height:25.9px;"><span>Item #19</span></div>
<div class="cell l" style="left:199.0px;top:832.2px;width:266.0px;height:25.9px;"><span>Item Description #19</span></div>
<div class="cell r" style="left:465.0px;top:832.2px;width:52.5px;height:25.9px;"><span>4</span></div>
<div class="cell l" style="left:517.5px;top:832.2px;width:72.5px;height:25.9px;"><span>ea</span></div>
<div class="cell l" style="left:87.0px;top:858.0px;width:112.0px;height:25.9px;"><span>Item #20</span></div>
<div class="cell l" style="left:199.0px;top:858.0px;width:266.0px;height:25.9px;"><span>Item Description #20</span></div>
<div class="cell r" style="left:465.0px;top:858.0px;width:52.5px;height:25.9px;"><span>35</span></div>
<div class="cell l" style="left:517.5px;top:858.0px;width:72.5px;height:25.9px;"><span>kg</span></div>
<svg style="left:0;top:0" width="1883.4" height="954" viewBox="0 0 1883.4 954"><path d="M86.4 366.70H590.6M86.4 392.56H590.6M86.4 418.42H590.6M86.4 444.28H590.6M86.4 470.14H590.6M86.4 496.00H590.6M86.4 521.86H590.6M86.4 547.72H590.6M86.4 573.58H590.6M86.4 599.44H590.6M86.4 625.30H590.6M86.4 651.16H590.6M86.4 677.02H590.6M86.4 702.88H590.6M86.4 728.74H590.6M86.4 754.60H590.6M86.4 780.46H590.6M86.4 806.32H590.6M86.4 832.18H590.6M86.4 858.04H590.6M86.4 883.90H590.6M86.4 909.76H590.6M86.4 935.62H590.6M86.4 961.48H590.6M87.00 366.1V987.9M199.00 366.1V987.9M465.00 366.1V987.9M517.50 366.1V987.9M590.00 366.1V987.9M601.4 366.70H844.6M601.4 392.56H844.6M601.4 418.42H844.6M601.4 444.28H844.6M601.4 470.14H844.6M601.4 496.00H844.6M601.4 521.86H844.6M601.4 547.72H844.6M601.4 573.58H844.6M601.4 599.44H844.6M601.4 625.30H844.6M601.4 651.16H844.6M601.4 677.02H844.6M601.4 702.88H844.6M601.4 728.74H844.6M601.4 754.60H844.6M601.4 780.46H844.6M601.4 806.32H844.6M601.4 832.18H844.6M601.4 858.04H844.6M601.4 883.90H844.6M601.4 909.76H844.6M601.4 935.62H844.6M601.4 961.48H844.6M602.00 366.1V987.9M723.00 366.1V987.9M844.00 366.1V987.9M601.4 185.00H844.6M601.4 214.30H844.6M601.4 243.50H844.6M601.4 272.80H844.6M601.4 302.00H844.6M601.4 331.30H844.6M602.00 184.4V331.9M844.00 184.4V331.9M723.00 213.7V244.1M855.4 366.70H1098.6M855.4 392.56H1098.6M855.4 418.42H1098.6M855.4 444.28H1098.6M855.4 470.14H1098.6M855.4 496.00H1098.6M855.4 521.86H1098.6M855.4 547.72H1098.6M855.4 573.58H1098.6M855.4 599.44H1098.6M855.4 625.30H1098.6M855.4 651.16H1098.6M855.4 677.02H1098.6M855.4 702.88H1098.6M855.4 728.74H1098.6M855.4 754.60H1098.6M855.4 780.46H1098.6M855.4 806.32H1098.6M855.4 832.18H1098.6M855.4 858.04H1098.6M855.4 883.90H1098.6M855.4 909.76H1098.6M855.4 935.62H1098.6M855.4 961.48H1098.6M856.00 366.1V987.9M977.00 366.1V987.9M1098.00 366.1V987.9M855.4 185.00H1098.6M855.4 214.30H1098.6M855.4 243.50H1098.6M855.4 272.80H1098.6M855.4 302.00H1098.6M855.4 331.30H1098.6M856.00 184.4V331.9M1098.00 184.4V331.9M977.00 213.7V244.1M1109.4 366.70H1352.6M1109.4 392.56H1352.6M1109.4 418.42H1352.6M1109.4 444.28H1352.6M1109.4 470.14H1352.6M1109.4 496.00H1352.6M1109.4 521.86H1352.6M1109.4 547.72H1352.6M1109.4 573.58H1352.6M1109.4 599.44H1352.6M1109.4 625.30H1352.6M1109.4 651.16H1352.6M1109.4 677.02H1352.6M1109.4 702.88H1352.6M1109.4 728.74H1352.6M1109.4 754.60H1352.6M1109.4 780.46H1352.6M1109.4 806.32H1352.6M1109.4 832.18H1352.6M1109.4 858.04H1352.6M1109.4 883.90H1352.6M1109.4 909.76H1352.6M1109.4 935.62H1352.6M1109.4 961.48H1352.6M1110.00 366.1V987.9M1231.00 366.1V987.9M1352.00 366.1V987.9M1109.4 185.00H1352.6M1109.4 214.30H1352.6M1109.4 243.50H1352.6M1109.4 272.80H1352.6M1109.4 302.00H1352.6M1109.4 331.30H1352.6M1110.00 184.4V331.9M1352.00 184.4V331.9M1231.00 213.7V244.1M1363.4 366.70H1606.6M1363.4 392.56H1606.6M1363.4 418.42H1606.6M1363.4 444.28H1606.6M1363.4 470.14H1606.6M1363.4 496.00H1606.6M1363.4 521.86H1606.6M1363.4 547.72H1606.6M1363.4 573.58H1606.6M1363.4 599.44H1606.6M1363.4 625.30H1606.6M1363.4 651.16H1606.6M1363.4 677.02H1606.6M1363.4 702.88H1606.6M1363.4 728.74H1606.6M1363.4 754.60H1606.6M1363.4 780.46H1606.6M1363.4 806.32H1606.6M1363.4 832.18H1606.6M1363.4 858.04H1606.6M1363.4 883.90H1606.6M1363.4 909.76H1606.6M1363.4 935.62H1606.6M1363.4 961.48H1606.6M1364.00 366.1V987.9M1485.00 366.1V987.9M1606.00 366.1V987.9M1363.4 185.00H1606.6M1363.4 214.30H1606.6M1363.4 243.50H1606.6M1363.4 272.80H1606.6M1363.4 302.00H1606.6M1363.4 331.30H1606.6M1364.00 184.4V331.9M1606.00 184.4V331.9M1485.00 213.7V244.1M1617.4 366.70H1861.6M1617.4 392.56H1861.6M1617.4 418.42H1861.6M1617.4 444.28H1861.6M1617.4 470.14H1861.6M1617.4 496.00H1861.6M1617.4 521.86H1861.6M1617.4 547.72H1861.6M1617.4 573.58H1861.6M1617.4 599.44H1861.6M1617.4 625.30H1861.6M1617.4 651.16H1861.6M1617.4 677.02H1861.6M1617.4 702.88H1861.6M1617.4 728.74H1861.6M1617.4 754.60H1861.6M1617.4 780.46H1861.6M1617.4 806.32H1861.6M1617.4 832.18H1861.6M1617.4 858.04H1861.6M1617.4 883.90H1861.6M1617.4 909.76H1861.6M1617.4 935.62H1861.6M1617.4 961.48H1861.6M1618.00 366.1V987.9M1739.50 366.1V987.9M1861.00 366.1V987.9M1617.4 185.00H1861.6M1617.4 214.30H1861.6M1617.4 243.50H1861.6M1617.4 272.80H1861.6M1617.4 302.00H1861.6M1617.4 331.30H1861.6M1618.00 184.4V331.9M1861.00 184.4V331.9M1739.50 213.7V244.1" stroke="#d3d3d3" stroke-width="1.25" fill="none"/><path d="M199.00 341.0V366.7M465.00 341.0V366.7M517.50 341.0V366.7M723.00 341.0V366.7M977.00 341.0V366.7M1231.00 341.0V366.7M1485.00 341.0V366.7M1739.50 341.0V366.7" stroke="#d9cfc8" stroke-width="1.25" fill="none"/><path d="M465.0 214.30H590.0M465.0 243.50H590.0M465.0 272.80H590.0M465.0 302.00H590.0" stroke="#c4c3b0" stroke-width="1.25" fill="none"/><path d="M464.4 185.30H590.6M464.4 331.00H590.6M465.30 184.4V331.9M589.70 184.4V331.9" stroke="#b9b7a0" stroke-width="1.25" fill="none"/></svg>
<div style="left:0.0px;top:0.0px;width:1883.4px;height:29.0px;background:#f8f9fa"></div>
<div class="ch" style="left:56.0px;top:0.0px;width:31.0px;height:29.3px;">A</div>
<div class="ch" style="left:87.0px;top:0.0px;width:112.0px;height:29.3px;">B</div>
<div class="ch" style="left:199.0px;top:0.0px;width:266.0px;height:29.3px;">C</div>
<div class="ch" style="left:465.0px;top:0.0px;width:52.5px;height:29.3px;">D</div>
<div class="ch" style="left:517.5px;top:0.0px;width:72.5px;height:29.3px;">E</div>
<div class="ch" style="left:590.0px;top:0.0px;width:12.0px;height:29.3px;">F</div>
<div class="ch" style="left:602.0px;top:0.0px;width:121.0px;height:29.3px;">G</div>
<div class="ch" style="left:723.0px;top:0.0px;width:121.0px;height:29.3px;">H</div>
<div class="ch" style="left:844.0px;top:0.0px;width:12.0px;height:29.3px;">I</div>
<div class="ch" style="left:856.0px;top:0.0px;width:121.0px;height:29.3px;">J</div>
<div class="ch" style="left:977.0px;top:0.0px;width:121.0px;height:29.3px;">K</div>
<div class="ch" style="left:1098.0px;top:0.0px;width:12.0px;height:29.3px;">L</div>
<div class="ch" style="left:1110.0px;top:0.0px;width:121.0px;height:29.3px;">M</div>
<div class="ch" style="left:1231.0px;top:0.0px;width:121.0px;height:29.3px;">N</div>
<div class="ch" style="left:1352.0px;top:0.0px;width:12.0px;height:29.3px;">O</div>
<div class="ch" style="left:1364.0px;top:0.0px;width:121.0px;height:29.3px;">P</div>
<div class="ch" style="left:1485.0px;top:0.0px;width:121.0px;height:29.3px;">Q</div>
<div class="ch" style="left:1606.0px;top:0.0px;width:12.0px;height:29.3px;">R</div>
<div class="ch" style="left:1618.0px;top:0.0px;width:121.5px;height:29.3px;">S</div>
<div class="ch" style="left:1739.5px;top:0.0px;width:121.5px;height:29.3px;">T</div>
<div class="ch" style="left:1861.0px;top:0.0px;width:12.8px;height:29.3px;">U</div>
<div class="ch" style="left:1873.8px;top:0.0px;width:9.6px;height:29.3px;"></div>
<div style="left:0.0px;top:29.0px;width:56.0px;height:925.0px;background:#f8f9fa"></div>
<div class="rh" style="left:0.0px;top:29.0px;width:56.0px;height:75.5px;line-height:75.8px;">1</div>
<div class="rh" style="left:0.0px;top:104.5px;width:56.0px;height:26.0px;line-height:25.5px;">2</div>
<div class="rh" style="left:0.0px;top:130.5px;width:56.0px;height:25.5px;line-height:25.0px;">3</div>
<div class="rh" style="left:0.0px;top:156.0px;width:56.0px;height:29.0px;line-height:28.5px;">4</div>
<div class="rh" style="left:0.0px;top:185.0px;width:56.0px;height:29.3px;line-height:28.8px;">5</div>
<div class="rh" style="left:0.0px;top:214.3px;width:56.0px;height:29.2px;line-height:28.7px;">6</div>
<div class="rh" style="left:0.0px;top:243.5px;width:56.0px;height:29.3px;line-height:28.8px;">7</div>
<div class="rh" style="left:0.0px;top:272.8px;width:56.0px;height:29.2px;line-height:28.7px;">8</div>
<div class="rh" style="left:0.0px;top:302.0px;width:56.0px;height:29.3px;line-height:28.8px;">9</div>
<div class="rh" style="left:0.0px;top:331.3px;width:56.0px;height:10.3px;line-height:9.8px;line-height:23.5px;overflow:hidden;">10</div>
<div class="rh" style="left:0.0px;top:341.6px;width:56.0px;height:25.1px;line-height:24.6px;">11</div>
<div class="rh" style="left:0.0px;top:366.7px;width:56.0px;height:25.9px;line-height:26.9px;">12</div>
<div class="rh" style="left:0.0px;top:392.6px;width:56.0px;height:25.9px;line-height:26.9px;background:#e8eaed;">13</div>
<div class="rh" style="left:0.0px;top:418.4px;width:56.0px;height:25.9px;line-height:26.9px;">14</div>
<div class="rh" style="left:0.0px;top:444.3px;width:56.0px;height:25.9px;line-height:26.9px;">15</div>
<div class="rh" style="left:0.0px;top:470.1px;width:56.0px;height:25.9px;line-height:26.9px;">16</div>
<div class="rh" style="left:0.0px;top:496.0px;width:56.0px;height:25.9px;line-height:26.9px;">17</div>
<div class="rh" style="left:0.0px;top:521.9px;width:56.0px;height:25.9px;line-height:26.9px;">18</div>
<div class="rh" style="left:0.0px;top:547.7px;width:56.0px;height:25.9px;line-height:26.9px;">19</div>
<div class="rh" style="left:0.0px;top:573.6px;width:56.0px;height:25.9px;line-height:26.9px;">20</div>
<div class="rh" style="left:0.0px;top:599.4px;width:56.0px;height:25.9px;line-height:26.9px;">21</div>
<div class="rh" style="left:0.0px;top:625.3px;width:56.0px;height:25.9px;line-height:26.9px;">22</div>
<div class="rh" style="left:0.0px;top:651.2px;width:56.0px;height:25.9px;line-height:26.9px;">23</div>
<div class="rh" style="left:0.0px;top:677.0px;width:56.0px;height:25.9px;line-height:26.9px;">24</div>
<div class="rh" style="left:0.0px;top:702.9px;width:56.0px;height:25.9px;line-height:26.9px;">25</div>
<div class="rh" style="left:0.0px;top:728.7px;width:56.0px;height:25.9px;line-height:26.9px;">26</div>
<div class="rh" style="left:0.0px;top:754.6px;width:56.0px;height:25.9px;line-height:26.9px;">27</div>
<div class="rh" style="left:0.0px;top:780.5px;width:56.0px;height:25.9px;line-height:26.9px;">28</div>
<div class="rh" style="left:0.0px;top:806.3px;width:56.0px;height:25.9px;line-height:26.9px;">29</div>
<div class="rh" style="left:0.0px;top:832.2px;width:56.0px;height:25.9px;line-height:26.9px;">30</div>
<div class="rh" style="left:0.0px;top:858.0px;width:56.0px;height:25.9px;line-height:26.9px;">31</div>
<div class="rh" style="left:0.0px;top:883.9px;width:56.0px;height:25.9px;line-height:26.9px;">32</div>
<div class="rh" style="left:0.0px;top:909.8px;width:56.0px;height:25.9px;line-height:26.9px;">33</div>
<div class="rh" style="left:0.0px;top:935.6px;width:56.0px;height:25.9px;line-height:26.9px;">34</div>
<div class="rh" style="left:0.0px;top:961.5px;width:56.0px;height:25.9px;line-height:26.9px;">35</div>
<svg style="left:0;top:0" width="1883.4" height="954" viewBox="0 0 1883.4 954"><path d="M87.00 0V29M199.00 0V29M465.00 0V29M517.50 0V29M590.00 0V29M602.00 0V29M723.00 0V29M844.00 0V29M856.00 0V29M977.00 0V29M1098.00 0V29M1110.00 0V29M1231.00 0V29M1352.00 0V29M1364.00 0V29M1485.00 0V29M1606.00 0V29M1618.00 0V29M1739.50 0V29M1861.00 0V29M1873.80 0V29M1883.40 0V29M0 29H1883.4M0 0.3H1895.4M0 104.50H56M0 130.50H56M0 156.00H56M0 185.00H56M0 214.30H56M0 243.50H56M0 272.80H56M0 302.00H56M0 331.30H56M0 341.60H56M0 366.70H56M0 392.56H56M0 418.42H56M0 444.28H56M0 470.14H56M0 496.00H56M0 521.86H56M0 547.72H56M0 573.58H56M0 599.44H56M0 625.30H56M0 651.16H56M0 677.02H56M0 702.88H56M0 728.74H56M0 754.60H56M0 780.46H56M0 806.32H56M0 832.18H56M0 858.04H56M0 883.90H56M0 909.76H56M0 935.62H56M0 961.48H56M0 987.34H56M56 29V954" stroke="#c6c8cb" stroke-width="1.25" fill="none"/></svg>
<div style="left:0.0px;top:0.6px;width:56.6px;height:29.0px;background:#f8f9fa;border-right:5.5px solid #bdbdbd;border-bottom:5.5px solid #bdbdbd"></div>
<svg style="left:1862.8px;top:12.199999999999989px" width="4" height="7" viewBox="0 0 6 9"><path d="M6 0v9L0 4.500z" fill="#111"/></svg>
<svg style="left:1880.3px;top:12.199999999999989px" width="3" height="7" viewBox="0 0 4 9"><path d="M0 0v9l4-4.500z" fill="#111"/></svg>
</div>
<div style="left:1883.4px;top:183.0px;width:10.6px;height:925.0px;background:#fff"></div>
<div style="left:1883.4px;top:154.0px;width:10.6px;height:29.0px;background:#f8f9fa;border-top:1.3px solid #c6c8cb;border-bottom:1.3px solid #c6c8cb"></div>
<div style="left:1883.6px;top:183.0px;width:1.3px;height:925.0px;background:#ececec"></div>
<div style="left:1887.0px;top:185.0px;width:7.0px;height:31.5px;background:#dfe1e5;border-radius:4px 0 0 4px"></div>
<div style="left:1883.3px;top:1069.0px;width:10.7px;height:19.0px;border:1.3px solid #dcdcdc;background:#fff"></div>
<div style="left:1883.3px;top:1087.0px;width:10.7px;height:21.0px;border:1.3px solid #dcdcdc;background:#fff"></div>
<svg style="left:1886.5px;top:1075.5px" width="6" height="4" viewBox="0 0 6 4"><path d="M0 4h6L3 0z" fill="#9a9a9a"/></svg>
<svg style="left:1886.5px;top:1096.0px" width="6" height="4" viewBox="0 0 6 4"><path d="M0 0h6L3 4z" fill="#9a9a9a"/></svg>
<div style="left:0.0px;top:1108.0px;width:1894.0px;height:15.0px;background:#fff"></div>
<div style="left:0.0px;top:1108.0px;width:56.0px;height:15.0px;background:#f8f9fa"></div>
<div style="left:0.0px;top:1107.6px;width:1884.0px;height:1.3px;background:#e1e1e1"></div>
<div style="left:55.4px;top:1108.0px;width:1.3px;height:15.0px;background:#d5d7da"></div>
<div style="left:58.5px;top:1110.5px;width:1286.5px;height:10.5px;background:#dadce0;border-radius:6px"></div>
<div style="left:1844.0px;top:1108.5px;width:20.0px;height:14.5px;border:1.3px solid #dcdcdc;border-bottom:none;background:#fff"></div>
<div style="left:1863.0px;top:1108.5px;width:20.6px;height:14.5px;border:1.3px solid #dcdcdc;border-bottom:none;background:#fff"></div>
<svg style="left:1851.0px;top:1112.5px" width="4" height="6" viewBox="0 0 4 6"><path d="M4 0v6L0 3z" fill="#9a9a9a"/></svg>
<svg style="left:1871.0px;top:1112.5px" width="4" height="6" viewBox="0 0 4 6"><path d="M0 0v6l4-3z" fill="#9a9a9a"/></svg>
<div style="left:0.0px;top:1122.7px;width:1894.0px;height:44.3px;background:linear-gradient(#f3f4f5,#eeeff0 60%,#e4e5e7)"></div>
<div style="left:141.5px;top:1122.7px;width:153.5px;height:44.3px;border-left:1.3px solid #e3e4e6;background:linear-gradient(#f3f4f5,#eeeff0 60%,#e4e5e7)"></div>
<div style="left:295.0px;top:1122.7px;width:212.5px;height:44.3px;background:linear-gradient(#ffffff,#fdfdfd 60%,#f0f0f1);box-shadow:0 0 3px rgba(0,0,0,.18)"></div>
<span class="t" style="left:161.8px;top:1134.6px;font-size:17.4px;line-height:22px;color:#555b61;letter-spacing:1.05px;-webkit-text-stroke:.45px #555b61">Instruction</span>
<svg style="left:265.8px;top:1144.1px" width="9.5" height="4.75" viewBox="0 0 10 5"><path d="M0 0h10L5 5z" fill="#6a6e73"/></svg>
<span class="t" style="left:315.8px;top:1134.6px;font-size:17.4px;line-height:22px;color:#2c7d3b;letter-spacing:.74px;-webkit-text-stroke:.5px #2c7d3b">Price Comparison</span>
<svg style="left:477.6px;top:1144.1px" width="9.5" height="4.75" viewBox="0 0 10 5"><path d="M0 0h10L5 5z" fill="#2c7d3b"/></svg>
<svg style="left:61.0px;top:1138.0px" width="13" height="13" viewBox="0 0 13 13"><path d="M6.500 0v13M0 6.500h13" stroke="#5f6368" stroke-width="2.100"/></svg>
<svg style="left:97.5px;top:1137.5px" width="16" height="14" viewBox="0 0 16 14"><path d="M0 1.200h16M0 5h16M0 8.800h16M0 12.600h16" stroke="#5f6368" stroke-width="2.100"/></svg>
<svg style="left:1782.0px;top:1135.0px" width="22" height="26" viewBox="0 0 22 26"><path d="M3 0h16a3 3 0 0 1 3 3v15.500a3 3 0 0 1-3 3h-4.500L11 25l-3.500-3.500H3a3 3 0 0 1-3-3V3a3 3 0 0 1 3-3z" fill="#6b6b6b"/><path d="M11 3.800c.9 4.300 2.300 5.800 6.600 6.700-4.300.9-5.700 2.400-6.600 6.700-.9-4.300-2.300-5.800-6.600-6.700 4.300-.9 5.700-2.400 6.600-6.700z" fill="#f3f3f3"/></svg>
<svg style="left:1858.5px;top:1142.5px" width="9" height="13" viewBox="0 0 9 13"><path d="M7.800 1L1.800 6.500l6 5.500" fill="none" stroke="#444" stroke-width="1.900"/></svg>
<div style="left:0.0px;top:1159.0px;width:2.0px;height:8.0px;background:#1d1570;border-radius:0 0 0 2px;clip-path:polygon(0 0,100% 100%,0 100%)"></div>
</div>
</body></html>
